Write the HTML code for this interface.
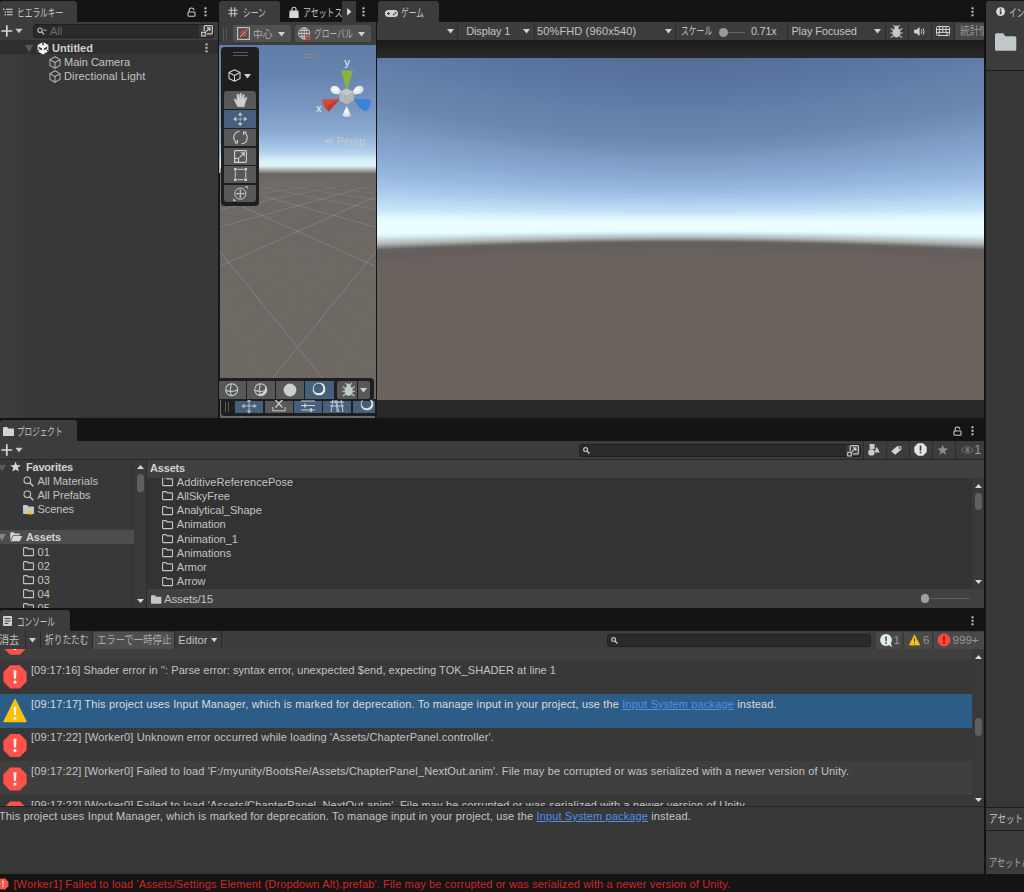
<!DOCTYPE html>
<html lang="ja">
<head>
<meta charset="utf-8">
<title>Unity Editor</title>
<style>
*{box-sizing:border-box;margin:0;padding:0}
html,body{width:1024px;height:892px;overflow:hidden;background:#141414}
body{position:relative;font-family:"Liberation Sans","Noto Sans CJK JP",sans-serif;font-size:11px;color:#c4c4c4;line-height:14px}
.abs{position:absolute}
.pan{position:absolute;background:#383838;overflow:hidden}
.tab{position:absolute;background:#3c3c3c;border-radius:3px 3px 0 0}
.tb{position:absolute;background:#3c3c3c}
.t{position:absolute;white-space:nowrap;line-height:14px}
.b{font-weight:bold}
.sx{display:inline-block;transform-origin:0 50%;white-space:nowrap}
.sep{position:absolute;width:1px;background:#2b2b2b}
svg{position:absolute;overflow:visible}
.btn{position:absolute;background:#515151;border-radius:2px}
.ob{position:absolute;background:#585858}
.ob.on{background:#46607c}
a{color:#4f92e8;text-decoration:underline}
</style>
<style>#gimg i{position:absolute;top:0;height:100%}.g0{background:linear-gradient(#526892 -18.3px,#566c96 0.7px,#58719e 15.7px,#5d79a4 41.7px,#647fa9 56.7px,#6b88b1 81.7px,#7190b8 91.7px,#7c9cc4 101.7px,#84a2cc 111.7px,#8cadd6 121.7px,#98b9de 131.7px,#a8c8ec 141.7px,#b6d8f2 148.7px,#c4e4f6 154.7px,#dcf4fc 159.7px,#eafeff 164.2px,#eafeff 172.2px,#d4f0fa 174.7px,#c8d6d8 176.7px,#b0b4b4 179.7px,#8e8e8c 181.7px,#686462 183.7px,#625e5c 186.7px,#68615d 191.7px,#6b635e 203.7px,#6b635e 361.7px)}.g1{background:linear-gradient(#526892 -18.4px,#566c96 0.6px,#58719e 15.6px,#5d79a4 41.6px,#647fa9 56.6px,#6b88b1 81.6px,#7190b8 91.6px,#7c9cc4 101.6px,#84a2cc 111.7px,#8cadd6 121.7px,#98b9de 131.7px,#a8c8ec 141.7px,#b6d8f2 148.7px,#c4e4f6 154.7px,#dcf4fc 159.7px,#eafeff 164.2px,#eafeff 172.2px,#d4f0fa 174.7px,#c8d6d8 176.7px,#b0b4b4 179.7px,#8e8e8c 181.7px,#686462 183.7px,#625e5c 186.7px,#68615d 191.7px,#6b635e 203.7px,#6b635e 361.9px)}.g2{background:linear-gradient(#526892 -18.7px,#566c96 0.3px,#58719e 15.4px,#5d79a4 41.4px,#647fa9 56.5px,#6b88b1 81.5px,#7190b8 91.5px,#7c9cc4 101.6px,#84a2cc 111.6px,#8cadd6 121.6px,#98b9de 131.6px,#a8c8ec 141.6px,#b6d8f2 148.7px,#c4e4f6 154.7px,#dcf4fc 159.7px,#eafeff 164.2px,#eafeff 172.2px,#d4f0fa 174.7px,#c8d6d8 176.7px,#b0b4b4 179.7px,#8e8e8c 181.7px,#686462 183.7px,#625e5c 186.7px,#68615d 191.8px,#6b635e 203.8px,#6b635e 362.1px)}.g3{background:linear-gradient(#526892 -19.1px,#566c96 -0.0px,#58719e 15.1px,#5d79a4 41.2px,#647fa9 56.2px,#6b88b1 81.3px,#7190b8 91.4px,#7c9cc4 101.4px,#84a2cc 111.5px,#8cadd6 121.5px,#98b9de 131.6px,#a8c8ec 141.6px,#b6d8f2 148.6px,#c4e4f6 154.7px,#dcf4fc 159.7px,#eafeff 164.2px,#eafeff 172.2px,#d4f0fa 174.7px,#c8d6d8 176.8px,#b0b4b4 179.8px,#8e8e8c 181.8px,#686462 183.8px,#625e5c 186.8px,#68615d 191.8px,#6b635e 203.9px,#6b635e 362.6px)}.g4{background:linear-gradient(#526892 -19.6px,#566c96 -0.5px,#58719e 14.6px,#5d79a4 40.8px,#647fa9 55.9px,#6b88b1 81.1px,#7190b8 91.2px,#7c9cc4 101.2px,#84a2cc 111.3px,#8cadd6 121.4px,#98b9de 131.5px,#a8c8ec 141.5px,#b6d8f2 148.6px,#c4e4f6 154.6px,#dcf4fc 159.7px,#eafeff 164.2px,#eafeff 172.3px,#d4f0fa 174.8px,#c8d6d8 176.8px,#b0b4b4 179.8px,#8e8e8c 181.8px,#686462 183.8px,#625e5c 186.9px,#68615d 191.9px,#6b635e 204.0px,#6b635e 363.1px)}.g5{background:linear-gradient(#526892 -20.3px,#566c96 -1.1px,#58719e 14.1px,#5d79a4 40.4px,#647fa9 55.5px,#6b88b1 80.8px,#7190b8 90.9px,#7c9cc4 101.0px,#84a2cc 111.1px,#8cadd6 121.2px,#98b9de 131.3px,#a8c8ec 141.5px,#b6d8f2 148.5px,#c4e4f6 154.6px,#dcf4fc 159.6px,#eafeff 164.2px,#eafeff 172.3px,#d4f0fa 174.8px,#c8d6d8 176.8px,#b0b4b4 179.9px,#8e8e8c 181.9px,#686462 183.9px,#625e5c 186.9px,#68615d 192.0px,#6b635e 204.1px,#6b635e 363.8px)}.g6{background:linear-gradient(#526892 -21.0px,#566c96 -1.7px,#58719e 13.5px,#5d79a4 39.9px,#647fa9 55.1px,#6b88b1 80.5px,#7190b8 90.6px,#7c9cc4 100.8px,#84a2cc 110.9px,#8cadd6 121.1px,#98b9de 131.2px,#a8c8ec 141.4px,#b6d8f2 148.5px,#c4e4f6 154.6px,#dcf4fc 159.6px,#eafeff 164.2px,#eafeff 172.3px,#d4f0fa 174.8px,#c8d6d8 176.9px,#b0b4b4 179.9px,#8e8e8c 182.0px,#686462 184.0px,#625e5c 187.0px,#68615d 192.1px,#6b635e 204.3px,#6b635e 364.6px)}.g7{background:linear-gradient(#526892 -21.9px,#566c96 -2.5px,#58719e 12.7px,#5d79a4 39.3px,#647fa9 54.6px,#6b88b1 80.1px,#7190b8 90.3px,#7c9cc4 100.5px,#84a2cc 110.7px,#8cadd6 120.8px,#98b9de 131.0px,#a8c8ec 141.2px,#b6d8f2 148.4px,#c4e4f6 154.5px,#dcf4fc 159.6px,#eafeff 164.2px,#eafeff 172.3px,#d4f0fa 174.9px,#c8d6d8 176.9px,#b0b4b4 180.0px,#8e8e8c 182.0px,#686462 184.1px,#625e5c 187.1px,#68615d 192.2px,#6b635e 204.5px,#6b635e 365.6px)}.g8{background:linear-gradient(#526892 -22.9px,#566c96 -3.5px,#58719e 11.9px,#5d79a4 38.6px,#647fa9 54.0px,#6b88b1 79.6px,#7190b8 89.8px,#7c9cc4 100.1px,#84a2cc 110.4px,#8cadd6 120.6px,#98b9de 130.9px,#a8c8ec 141.1px,#b6d8f2 148.3px,#c4e4f6 154.4px,#dcf4fc 159.6px,#eafeff 164.2px,#eafeff 172.4px,#d4f0fa 175.0px,#c8d6d8 177.0px,#b0b4b4 180.1px,#8e8e8c 182.1px,#686462 184.2px,#625e5c 187.3px,#68615d 192.4px,#6b635e 204.7px,#6b635e 366.7px)}.g9{background:linear-gradient(#526892 -24.1px,#566c96 -4.5px,#58719e 11.0px,#5d79a4 37.8px,#647fa9 53.3px,#6b88b1 79.1px,#7190b8 89.4px,#7c9cc4 99.7px,#84a2cc 110.0px,#8cadd6 120.3px,#98b9de 130.7px,#a8c8ec 141.0px,#b6d8f2 148.2px,#c4e4f6 154.4px,#dcf4fc 159.5px,#eafeff 164.2px,#eafeff 172.4px,#d4f0fa 175.0px,#c8d6d8 177.1px,#b0b4b4 180.2px,#8e8e8c 182.2px,#686462 184.3px,#625e5c 187.4px,#68615d 192.6px,#6b635e 204.9px,#6b635e 367.9px)}.g10{background:linear-gradient(#526892 -25.3px,#566c96 -5.6px,#58719e 10.0px,#5d79a4 37.0px,#647fa9 52.5px,#6b88b1 78.5px,#7190b8 88.9px,#7c9cc4 99.3px,#84a2cc 109.7px,#8cadd6 120.0px,#98b9de 130.4px,#a8c8ec 140.8px,#b6d8f2 148.1px,#c4e4f6 154.3px,#dcf4fc 159.5px,#eafeff 164.2px,#eafeff 172.5px,#d4f0fa 175.1px,#c8d6d8 177.2px,#b0b4b4 180.3px,#8e8e8c 182.4px,#686462 184.4px,#625e5c 187.5px,#68615d 192.7px,#6b635e 205.2px,#6b635e 369.3px)}.g11{background:linear-gradient(#526892 -26.7px,#566c96 -6.8px,#58719e 8.9px,#5d79a4 36.0px,#647fa9 51.7px,#6b88b1 77.9px,#7190b8 88.3px,#7c9cc4 98.8px,#84a2cc 109.3px,#8cadd6 119.7px,#98b9de 130.2px,#a8c8ec 140.6px,#b6d8f2 148.0px,#c4e4f6 154.2px,#dcf4fc 159.5px,#eafeff 164.2px,#eafeff 172.5px,#d4f0fa 175.2px,#c8d6d8 177.3px,#b0b4b4 180.4px,#8e8e8c 182.5px,#686462 184.6px,#625e5c 187.7px,#68615d 192.9px,#6b635e 205.5px,#6b635e 370.8px)}.g12{background:linear-gradient(#526892 -28.2px,#566c96 -8.2px,#58719e 7.6px,#5d79a4 35.0px,#647fa9 50.9px,#6b88b1 77.2px,#7190b8 87.8px,#7c9cc4 98.3px,#84a2cc 108.8px,#8cadd6 119.4px,#98b9de 129.9px,#a8c8ec 140.5px,#b6d8f2 147.8px,#c4e4f6 154.2px,#dcf4fc 159.4px,#eafeff 164.2px,#eafeff 172.6px,#d4f0fa 175.2px,#c8d6d8 177.3px,#b0b4b4 180.5px,#8e8e8c 182.6px,#686462 184.7px,#625e5c 187.9px,#68615d 193.2px,#6b635e 205.8px,#6b635e 372.4px)}.g13{background:linear-gradient(#526892 -29.8px,#566c96 -9.6px,#58719e 6.3px,#5d79a4 34.0px,#647fa9 49.9px,#6b88b1 76.5px,#7190b8 87.1px,#7c9cc4 97.7px,#84a2cc 108.4px,#8cadd6 119.0px,#98b9de 129.6px,#a8c8ec 140.3px,#b6d8f2 147.7px,#c4e4f6 154.1px,#dcf4fc 159.4px,#eafeff 164.2px,#eafeff 172.7px,#d4f0fa 175.3px,#c8d6d8 177.5px,#b0b4b4 180.6px,#8e8e8c 182.8px,#686462 184.9px,#625e5c 188.1px,#68615d 193.4px,#6b635e 206.2px,#6b635e 374.1px)}.g14{background:linear-gradient(#526892 -31.5px,#566c96 -11.1px,#58719e 4.9px,#5d79a4 32.8px,#647fa9 48.9px,#6b88b1 75.7px,#7190b8 86.4px,#7c9cc4 97.2px,#84a2cc 107.9px,#8cadd6 118.6px,#98b9de 129.3px,#a8c8ec 140.0px,#b6d8f2 147.5px,#c4e4f6 154.0px,#dcf4fc 159.3px,#eafeff 164.2px,#eafeff 172.7px,#d4f0fa 175.4px,#c8d6d8 177.6px,#b0b4b4 180.8px,#8e8e8c 182.9px,#686462 185.1px,#625e5c 188.3px,#68615d 193.6px,#6b635e 206.5px,#6b635e 375.9px)}.g15{background:linear-gradient(#526892 -33.3px,#566c96 -12.8px,#58719e 3.5px,#5d79a4 31.6px,#647fa9 47.8px,#6b88b1 74.9px,#7190b8 85.7px,#7c9cc4 96.5px,#84a2cc 107.4px,#8cadd6 118.2px,#98b9de 129.0px,#a8c8ec 139.8px,#b6d8f2 147.4px,#c4e4f6 153.9px,#dcf4fc 159.3px,#eafeff 164.2px,#eafeff 172.8px,#d4f0fa 175.5px,#c8d6d8 177.7px,#b0b4b4 180.9px,#8e8e8c 183.1px,#686462 185.3px,#625e5c 188.5px,#68615d 193.9px,#6b635e 206.9px,#6b635e 377.9px)}.g16{background:linear-gradient(#526892 -35.2px,#566c96 -14.5px,#58719e 1.9px,#5d79a4 30.3px,#647fa9 46.7px,#6b88b1 74.0px,#7190b8 84.9px,#7c9cc4 95.9px,#84a2cc 106.8px,#8cadd6 117.7px,#98b9de 128.6px,#a8c8ec 139.6px,#b6d8f2 147.2px,#c4e4f6 153.8px,#dcf4fc 159.2px,#eafeff 164.2px,#eafeff 172.9px,#d4f0fa 175.6px,#c8d6d8 177.8px,#b0b4b4 181.1px,#8e8e8c 183.3px,#686462 185.5px,#625e5c 188.7px,#68615d 194.2px,#6b635e 207.3px,#6b635e 379.9px)}.g17{background:linear-gradient(#526892 -37.2px,#566c96 -16.3px,#58719e 0.3px,#5d79a4 29.0px,#647fa9 45.5px,#6b88b1 73.1px,#7190b8 84.1px,#7c9cc4 95.2px,#84a2cc 106.2px,#8cadd6 117.2px,#98b9de 128.3px,#a8c8ec 139.3px,#b6d8f2 147.0px,#c4e4f6 153.7px,#dcf4fc 159.2px,#eafeff 164.1px,#eafeff 173.0px,#d4f0fa 175.7px,#c8d6d8 177.9px,#b0b4b4 181.3px,#8e8e8c 183.5px,#686462 185.7px,#625e5c 189.0px,#68615d 194.5px,#6b635e 207.7px,#6b635e 382.1px)}.g18{background:linear-gradient(#526892 -39.4px,#566c96 -18.2px,#58719e -1.4px,#5d79a4 27.5px,#647fa9 44.3px,#6b88b1 72.1px,#7190b8 83.3px,#7c9cc4 94.5px,#84a2cc 105.6px,#8cadd6 116.8px,#98b9de 127.9px,#a8c8ec 139.1px,#b6d8f2 146.9px,#c4e4f6 153.5px,#dcf4fc 159.1px,#eafeff 164.1px,#eafeff 173.1px,#d4f0fa 175.9px,#c8d6d8 178.1px,#b0b4b4 181.4px,#8e8e8c 183.7px,#686462 185.9px,#625e5c 189.2px,#68615d 194.8px,#6b635e 208.2px,#6b635e 384.4px)}.g19{background:linear-gradient(#526892 -41.6px,#566c96 -20.1px,#58719e -3.2px,#5d79a4 26.1px,#647fa9 43.0px,#6b88b1 71.1px,#7190b8 82.4px,#7c9cc4 93.7px,#84a2cc 105.0px,#8cadd6 116.2px,#98b9de 127.5px,#a8c8ec 138.8px,#b6d8f2 146.7px,#c4e4f6 153.4px,#dcf4fc 159.1px,#eafeff 164.1px,#eafeff 173.2px,#d4f0fa 176.0px,#c8d6d8 178.2px,#b0b4b4 181.6px,#8e8e8c 183.9px,#686462 186.1px,#625e5c 189.5px,#68615d 195.1px,#6b635e 208.7px,#6b635e 386.7px)}.g20{background:linear-gradient(#526892 -43.9px,#566c96 -22.2px,#58719e -5.1px,#5d79a4 24.5px,#647fa9 41.6px,#6b88b1 70.1px,#7190b8 81.5px,#7c9cc4 92.9px,#84a2cc 104.3px,#8cadd6 115.7px,#98b9de 127.1px,#a8c8ec 138.5px,#b6d8f2 146.5px,#c4e4f6 153.3px,#dcf4fc 159.0px,#eafeff 164.1px,#eafeff 173.2px,#d4f0fa 176.1px,#c8d6d8 178.4px,#b0b4b4 181.8px,#8e8e8c 184.1px,#686462 186.4px,#625e5c 189.8px,#68615d 195.5px,#6b635e 209.1px,#6b635e 389.2px)}.g21{background:linear-gradient(#526892 -46.2px,#566c96 -24.3px,#58719e -7.1px,#5d79a4 22.9px,#647fa9 40.2px,#6b88b1 69.0px,#7190b8 80.6px,#7c9cc4 92.1px,#84a2cc 103.6px,#8cadd6 115.1px,#98b9de 126.7px,#a8c8ec 138.2px,#b6d8f2 146.3px,#c4e4f6 153.2px,#dcf4fc 158.9px,#eafeff 164.1px,#eafeff 173.3px,#d4f0fa 176.2px,#c8d6d8 178.5px,#b0b4b4 182.0px,#8e8e8c 184.3px,#686462 186.6px,#625e5c 190.1px,#68615d 195.8px,#6b635e 209.7px,#6b635e 391.8px)}.g22{background:linear-gradient(#526892 -48.7px,#566c96 -26.6px,#58719e -9.1px,#5d79a4 21.3px,#647fa9 38.8px,#6b88b1 67.9px,#7190b8 79.6px,#7c9cc4 91.2px,#84a2cc 102.9px,#8cadd6 114.6px,#98b9de 126.2px,#a8c8ec 137.9px,#b6d8f2 146.0px,#c4e4f6 153.0px,#dcf4fc 158.9px,#eafeff 164.1px,#eafeff 173.4px,#d4f0fa 176.4px,#c8d6d8 178.7px,#b0b4b4 182.2px,#8e8e8c 184.5px,#686462 186.9px,#625e5c 190.4px,#68615d 196.2px,#6b635e 210.2px,#6b635e 394.4px)}.g23{background:linear-gradient(#526892 -51.3px,#566c96 -28.8px,#58719e -11.1px,#5d79a4 19.5px,#647fa9 37.2px,#6b88b1 66.7px,#7190b8 78.6px,#7c9cc4 90.4px,#84a2cc 102.2px,#8cadd6 114.0px,#98b9de 125.8px,#a8c8ec 137.6px,#b6d8f2 145.8px,#c4e4f6 152.9px,#dcf4fc 158.8px,#eafeff 164.1px,#eafeff 173.6px,#d4f0fa 176.5px,#c8d6d8 178.9px,#b0b4b4 182.4px,#8e8e8c 184.8px,#686462 187.1px,#625e5c 190.7px,#68615d 196.6px,#6b635e 210.7px,#6b635e 397.2px)}.g24{background:linear-gradient(#526892 -53.9px,#566c96 -31.2px,#58719e -13.3px,#5d79a4 17.8px,#647fa9 35.7px,#6b88b1 65.6px,#7190b8 77.5px,#7c9cc4 89.4px,#84a2cc 101.4px,#8cadd6 113.3px,#98b9de 125.3px,#a8c8ec 137.2px,#b6d8f2 145.6px,#c4e4f6 152.8px,#dcf4fc 158.7px,#eafeff 164.1px,#eafeff 173.7px,#d4f0fa 176.6px,#c8d6d8 179.0px,#b0b4b4 182.6px,#8e8e8c 185.0px,#686462 187.4px,#625e5c 191.0px,#68615d 197.0px,#6b635e 211.3px,#6b635e 400.0px)}.g25{background:linear-gradient(#526892 -56.6px,#566c96 -33.6px,#58719e -15.5px,#5d79a4 16.0px,#647fa9 34.1px,#6b88b1 64.3px,#7190b8 76.4px,#7c9cc4 88.5px,#84a2cc 100.6px,#8cadd6 112.7px,#98b9de 124.8px,#a8c8ec 136.9px,#b6d8f2 145.4px,#c4e4f6 152.6px,#dcf4fc 158.7px,#eafeff 164.1px,#eafeff 173.8px,#d4f0fa 176.8px,#c8d6d8 179.2px,#b0b4b4 182.8px,#8e8e8c 185.3px,#686462 187.7px,#625e5c 191.3px,#68615d 197.4px,#6b635e 211.9px,#6b635e 402.9px)}.g26{background:linear-gradient(#526892 -59.4px,#566c96 -36.1px,#58719e -17.7px,#5d79a4 14.1px,#647fa9 32.5px,#6b88b1 63.1px,#7190b8 75.3px,#7c9cc4 87.6px,#84a2cc 99.8px,#8cadd6 112.0px,#98b9de 124.3px,#a8c8ec 136.5px,#b6d8f2 145.1px,#c4e4f6 152.5px,#dcf4fc 158.6px,#eafeff 164.1px,#eafeff 173.9px,#d4f0fa 176.9px,#c8d6d8 179.4px,#b0b4b4 183.1px,#8e8e8c 185.5px,#686462 188.0px,#625e5c 191.6px,#68615d 197.8px,#6b635e 212.5px,#6b635e 405.9px)}.g27{background:linear-gradient(#526892 -62.2px,#566c96 -38.7px,#58719e -20.1px,#5d79a4 12.2px,#647fa9 30.8px,#6b88b1 61.8px,#7190b8 74.2px,#7c9cc4 86.6px,#84a2cc 99.0px,#8cadd6 111.4px,#98b9de 123.8px,#a8c8ec 136.2px,#b6d8f2 144.9px,#c4e4f6 152.3px,#dcf4fc 158.5px,#eafeff 164.1px,#eafeff 174.0px,#d4f0fa 177.1px,#c8d6d8 179.6px,#b0b4b4 183.3px,#8e8e8c 185.8px,#686462 188.3px,#625e5c 192.0px,#68615d 198.2px,#6b635e 213.1px,#6b635e 409.0px)}.g28{background:linear-gradient(#526892 -65.2px,#566c96 -41.3px,#58719e -22.4px,#5d79a4 10.2px,#647fa9 29.0px,#6b88b1 60.4px,#7190b8 73.0px,#7c9cc4 85.6px,#84a2cc 98.1px,#8cadd6 110.7px,#98b9de 123.3px,#a8c8ec 135.8px,#b6d8f2 144.6px,#c4e4f6 152.1px,#dcf4fc 158.4px,#eafeff 164.1px,#eafeff 174.1px,#d4f0fa 177.3px,#c8d6d8 179.8px,#b0b4b4 183.5px,#8e8e8c 186.1px,#686462 188.6px,#625e5c 192.3px,#68615d 198.6px,#6b635e 213.7px,#6b635e 412.1px)}.g29{background:linear-gradient(#526892 -68.1px,#566c96 -44.0px,#58719e -24.9px,#5d79a4 8.2px,#647fa9 27.3px,#6b88b1 59.1px,#7190b8 71.8px,#7c9cc4 84.5px,#84a2cc 97.3px,#8cadd6 110.0px,#98b9de 122.7px,#a8c8ec 135.4px,#b6d8f2 144.3px,#c4e4f6 152.0px,#dcf4fc 158.3px,#eafeff 164.1px,#eafeff 174.2px,#d4f0fa 177.4px,#c8d6d8 180.0px,#b0b4b4 183.8px,#8e8e8c 186.3px,#686462 188.9px,#625e5c 192.7px,#68615d 199.1px,#6b635e 214.3px,#6b635e 415.4px)}.g30{background:linear-gradient(#526892 -71.2px,#566c96 -46.7px,#58719e -27.4px,#5d79a4 6.2px,#647fa9 25.5px,#6b88b1 57.7px,#7190b8 70.6px,#7c9cc4 83.5px,#84a2cc 96.4px,#8cadd6 109.3px,#98b9de 122.2px,#a8c8ec 135.1px,#b6d8f2 144.1px,#c4e4f6 151.8px,#dcf4fc 158.3px,#eafeff 164.1px,#eafeff 174.4px,#d4f0fa 177.6px,#c8d6d8 180.2px,#b0b4b4 184.0px,#8e8e8c 186.6px,#686462 189.2px,#625e5c 193.1px,#68615d 199.5px,#6b635e 215.0px,#6b635e 418.6px)}.g31{background:linear-gradient(#526892 -74.3px,#566c96 -49.5px,#58719e -29.9px,#5d79a4 4.1px,#647fa9 23.7px,#6b88b1 56.3px,#7190b8 69.4px,#7c9cc4 82.4px,#84a2cc 95.5px,#8cadd6 108.5px,#98b9de 121.6px,#a8c8ec 134.7px,#b6d8f2 143.8px,#c4e4f6 151.6px,#dcf4fc 158.2px,#eafeff 164.0px,#eafeff 174.5px,#d4f0fa 177.8px,#c8d6d8 180.4px,#b0b4b4 184.3px,#8e8e8c 186.9px,#686462 189.5px,#625e5c 193.4px,#68615d 200.0px,#6b635e 215.6px,#6b635e 422.0px)}.g32{background:linear-gradient(#526892 -77.5px,#566c96 -52.3px,#58719e -32.5px,#5d79a4 1.9px,#647fa9 21.8px,#6b88b1 54.9px,#7190b8 68.1px,#7c9cc4 81.3px,#84a2cc 94.6px,#8cadd6 107.8px,#98b9de 121.0px,#a8c8ec 134.3px,#b6d8f2 143.5px,#c4e4f6 151.5px,#dcf4fc 158.1px,#eafeff 164.0px,#eafeff 174.6px,#d4f0fa 177.9px,#c8d6d8 180.6px,#b0b4b4 184.5px,#8e8e8c 187.2px,#686462 189.8px,#625e5c 193.8px,#68615d 200.4px,#6b635e 216.3px,#6b635e 425.4px)}.g33{background:linear-gradient(#526892 -80.7px,#566c96 -55.2px,#58719e -35.1px,#5d79a4 -0.2px,#647fa9 19.9px,#6b88b1 53.4px,#7190b8 66.8px,#7c9cc4 80.2px,#84a2cc 93.6px,#8cadd6 107.0px,#98b9de 120.4px,#a8c8ec 133.9px,#b6d8f2 143.2px,#c4e4f6 151.3px,#dcf4fc 158.0px,#eafeff 164.0px,#eafeff 174.8px,#d4f0fa 178.1px,#c8d6d8 180.8px,#b0b4b4 184.8px,#8e8e8c 187.5px,#686462 190.2px,#625e5c 194.2px,#68615d 200.9px,#6b635e 217.0px,#6b635e 428.9px)}.g34{background:linear-gradient(#526892 -84.0px,#566c96 -58.1px,#58719e -37.8px,#5d79a4 -2.4px,#647fa9 17.9px,#6b88b1 51.9px,#7190b8 65.5px,#7c9cc4 79.1px,#84a2cc 92.7px,#8cadd6 106.3px,#98b9de 119.9px,#a8c8ec 133.4px,#b6d8f2 143.0px,#c4e4f6 151.1px,#dcf4fc 157.9px,#eafeff 164.0px,#eafeff 174.9px,#d4f0fa 178.3px,#c8d6d8 181.0px,#b0b4b4 185.1px,#8e8e8c 187.8px,#686462 190.5px,#625e5c 194.6px,#68615d 201.4px,#6b635e 217.7px,#6b635e 432.4px)}.g35{background:linear-gradient(#526892 -87.3px,#566c96 -61.1px,#58719e -40.5px,#5d79a4 -4.7px,#647fa9 16.0px,#6b88b1 50.4px,#7190b8 64.2px,#7c9cc4 77.9px,#84a2cc 91.7px,#8cadd6 105.5px,#98b9de 119.3px,#a8c8ec 133.0px,#b6d8f2 142.7px,#c4e4f6 150.9px,#dcf4fc 157.8px,#eafeff 164.0px,#eafeff 175.0px,#d4f0fa 178.5px,#c8d6d8 181.2px,#b0b4b4 185.4px,#8e8e8c 188.1px,#686462 190.9px,#625e5c 195.0px,#68615d 201.9px,#6b635e 218.4px,#6b635e 436.0px)}.g36{background:linear-gradient(#526892 -90.7px,#566c96 -64.2px,#58719e -43.2px,#5d79a4 -6.9px,#647fa9 14.0px,#6b88b1 48.9px,#7190b8 62.8px,#7c9cc4 76.8px,#84a2cc 90.7px,#8cadd6 104.7px,#98b9de 118.6px,#a8c8ec 132.6px,#b6d8f2 142.4px,#c4e4f6 150.7px,#dcf4fc 157.7px,#eafeff 164.0px,#eafeff 175.2px,#d4f0fa 178.7px,#c8d6d8 181.4px,#b0b4b4 185.6px,#8e8e8c 188.4px,#686462 191.2px,#625e5c 195.4px,#68615d 202.4px,#6b635e 219.1px,#6b635e 439.6px)}.g37{background:linear-gradient(#526892 -94.1px,#566c96 -67.2px,#58719e -46.0px,#5d79a4 -9.2px,#647fa9 12.0px,#6b88b1 47.3px,#7190b8 61.5px,#7c9cc4 75.6px,#84a2cc 89.7px,#8cadd6 103.9px,#98b9de 118.0px,#a8c8ec 132.2px,#b6d8f2 142.1px,#c4e4f6 150.6px,#dcf4fc 157.6px,#eafeff 164.0px,#eafeff 175.3px,#d4f0fa 178.8px,#c8d6d8 181.7px,#b0b4b4 185.9px,#8e8e8c 188.7px,#686462 191.6px,#625e5c 195.8px,#68615d 202.9px,#6b635e 219.9px,#6b635e 443.3px)}</style>
</head>
<body>

<div class="tab" style="left:0;top:1px;width:77px;height:22px"></div>
<svg style="left:3px;top:8px" width="10" height="8" viewBox="0 0 10 8" fill="#c4c4c4"><rect x="0" y="0.6" width="1.5" height="1.4"/><rect x="3" y="0.7" width="6.6" height="1.2"/><rect x="1.6" y="3.3" width="1.5" height="1.4"/><rect x="4" y="3.4" width="5.6" height="1.2"/><rect x="1.6" y="6" width="1.5" height="1.4"/><rect x="4" y="6.1" width="5.6" height="1.2"/></svg>
<div class="t" id="t_hier" style="left:17px;top:5.7px"><span class="sx" style="transform:scaleX(0.7)">ヒエラルキー</span></div>
<svg style="left:186.5px;top:6.8px" width="9" height="10" viewBox="0 0 9 10"><rect x="1" y="5" width="7" height="4.2" rx="0.8" fill="none" stroke="#c8c8c8" stroke-width="1.1"/><path d="M2.2 5V3.4A2.3 2.3 0 0 1 6.8 3.2" fill="none" stroke="#c8c8c8" stroke-width="1.05"/></svg>
<svg style="left:204.3px;top:6.8px" width="3" height="10" viewBox="0 0 3 10"><g fill="#c4c4c4"><rect x="0.5" y="0.3" width="2" height="2"/><rect x="0.5" y="3.8" width="2" height="2"/><rect x="0.5" y="7.3" width="2" height="2"/></g></svg>
<div class="pan" id="hier" style="left:0;top:22px;width:218px;height:396px">
<div class="tb" style="left:0;top:0;width:218px;height:18px"></div>
<svg style="left:0.8px;top:3px" width="22" height="12" viewBox="0 0 22 12"><path d="M0.3 6H11.3M5.8 0.3V11.7" stroke="#d6d6d6" stroke-width="1.7" fill="none"/><path d="M14.3 3.8H21.7L18 8.2Z" fill="#c8c8c8"/></svg>
<div class="abs" style="left:33px;top:2px;width:181px;height:14px;background:#2a2a2a;border:1px solid #1f1f1f;border-radius:3px"></div>
<div class="abs" style="left:199px;top:3px;width:14px;height:12px;background:#3a3a3a;border-radius:0 2px 2px 0"></div>
<svg style="left:37px;top:5px" width="10" height="9" viewBox="0 0 10 9" fill="none" stroke="#b4b4b4"><circle cx="3" cy="3.2" r="2.2" stroke-width="1.2"/><path d="M4.8 5L7 7.4" stroke-width="1.5"/><path d="M6.6 3.2H9.4" stroke-width="1.2"/></svg>
<div class="t" id="t_all" style="left:50px;top:2px;color:#6c6c6c">All</div>
<svg style="left:200.5px;top:3.3px" width="12" height="12" viewBox="0 0 12 12" fill="none" stroke="#c8c8c8"><path d="M3.2 6.2V1.6A1 1 0 0 1 4.2 0.6H10.4A1 1 0 0 1 11.4 1.6V7.8A1 1 0 0 1 10.4 8.8H5.8" stroke-width="1.2"/><rect x="0.7" y="7.4" width="3.6" height="3.6" stroke-width="1.1"/><path d="M4.6 7.2L8.8 3M5.9 2.9H8.9V5.9" stroke-width="1.2"/></svg>
<div class="abs" style="left:0;top:32px;width:23px;bottom:0;background:#3b3b3b"></div>
<div class="abs" style="left:0;top:18px;width:218px;height:14px;background:#2f2f2f"></div>
<svg style="left:24.8px;top:23px" width="8.2" height="7" viewBox="0 0 8.2 7"><path d="M0 0H8.2L4.1 7Z" fill="#5a5a5a"/></svg>
<svg style="left:36.6px;top:19.7px" width="12" height="12.4" viewBox="0 0 12 12.4"><path d="M6 0L11.4 3.1V9.3L6 12.4L0.6 9.3V3.1Z" fill="#eef4f6"/><path d="M5.3 0V3.2H6.7V0Z" fill="#2f2f2f"/><path d="M1.6 4.6L5 6.4V8.2L2.2 7Z" fill="#2f2f2f"/><path d="M10.4 4.6L7 6.4V8.2L9.8 7Z" fill="#2f2f2f"/><path d="M0.6 8.2L1.8 7.6L2.4 8.6L1.2 9.6ZM11.4 8.2L10.2 7.6L9.6 8.6L10.8 9.6Z" fill="#2f2f2f"/></svg>
<div class="t b" id="t_untitled" style="left:52px;top:18.7px;color:#d2d2d2">Untitled</div>
<svg style="left:205px;top:21px" width="3" height="10" viewBox="0 0 3 10"><g fill="#c4c4c4"><rect x="0.5" y="0.3" width="2" height="2"/><rect x="0.5" y="3.8" width="2" height="2"/><rect x="0.5" y="7.3" width="2" height="2"/></g></svg>
<svg style="left:48.6px;top:34px" width="12" height="13" viewBox="0 0 13 13" preserveAspectRatio="none" fill="none" stroke="#bcbcbc" stroke-width="1.05" stroke-linejoin="round"><path d="M6.5 0.7L12 3.6V9.4L6.5 12.3L1 9.4V3.6Z"/><path d="M1 3.6L6.5 6.5L12 3.6M6.5 6.5V12.3"/></svg>
<svg style="left:48.6px;top:48px" width="12" height="13" viewBox="0 0 13 13" preserveAspectRatio="none" fill="none" stroke="#bcbcbc" stroke-width="1.05" stroke-linejoin="round"><path d="M6.5 0.7L12 3.6V9.4L6.5 12.3L1 9.4V3.6Z"/><path d="M1 3.6L6.5 6.5L12 3.6M6.5 6.5V12.3"/></svg>
<div class="t" id="t_maincam" style="left:64px;top:33px">Main Camera</div>
<div class="t" id="t_dirlight" style="letter-spacing:0.153px;left:64px;top:47px">Directional Light</div>
</div>
<div class="tab" style="left:219px;top:1px;width:60.5px;height:22px"></div>
<svg style="left:228px;top:7px" width="10" height="10" viewBox="0 0 10 10" fill="none" stroke="#c8c8c8" stroke-width="1.1"><path d="M3.2 0.3V9.7M6.8 0.3V9.7M0.3 3.2H9.7M0.3 6.8H9.7"/></svg>
<div class="t" id="t_scene" style="left:243px;top:5.7px"><span class="sx" style="transform:scaleX(0.7)">シーン</span></div>
<svg style="left:289px;top:7px" width="10" height="11" viewBox="0 0 10 11"><path d="M0.6 3.6H9.4L9.8 10.2A0.7 0.7 0 0 1 9.1 10.9H0.9A0.7 0.7 0 0 1 0.2 10.2Z" fill="#d0d8d8"/><path d="M3 4.2V2.3A2 2 0 0 1 7 2.3V4.2" fill="none" stroke="#d0d8d8" stroke-width="1.1"/></svg>
<div class="t" id="t_asset" style="left:303px;top:5.7px;width:39px;overflow:hidden"><span class="sx" style="transform:scaleX(0.72)">アセットス</span></div>
<div class="abs" style="left:342px;top:1px;width:14px;height:21px;background:#3a3a3a"></div>
<svg style="left:346.6px;top:7.8px" width="4.4" height="7.4" viewBox="0 0 5 9"><path d="M0 0L5 4.5L0 9Z" fill="#e0e0e0"/></svg>
<svg style="left:362.2px;top:6.6px" width="3" height="10" viewBox="0 0 3 10"><g fill="#c4c4c4"><rect x="0.5" y="0.3" width="2" height="2"/><rect x="0.5" y="3.8" width="2" height="2"/><rect x="0.5" y="7.3" width="2" height="2"/></g></svg>
<div class="pan" id="scene" style="left:219px;top:22px;width:157px;height:396px;background:#191919">
<div class="tb" style="left:0;top:0;width:156.5px;height:23px"></div>
<div class="abs" style="left:3.9px;top:5px;width:1px;height:14px;background:#505660"></div><div class="abs" style="left:6.9px;top:5px;width:1px;height:14px;background:#555"></div>
<div class="btn" style="left:14px;top:3px;width:57.5px;height:17px"></div>
<svg style="left:18px;top:5px" width="13" height="13" viewBox="0 0 13 13" fill="none"><rect x="0.6" y="0.6" width="11.8" height="11.8" stroke="#c8c8c8" stroke-width="1.1"/><path d="M3 10L10.5 2.5" stroke="#c8c8c8" stroke-width="0.9"/><circle cx="6.6" cy="6.2" r="2.3" stroke="#e8483c" stroke-width="1.3"/></svg>
<div class="t" id="t_center" style="left:34px;top:5px;font-size:10.5px;color:#acacac"><span class="sx" style="transform:scaleX(0.92)">中心</span></div>
<svg style="left:59.4px;top:10px" width="7" height="4.4" viewBox="0 0 7 4.4"><path d="M0 0H7L3.5 4.4Z" fill="#d0d0d0"/></svg>
<div class="btn" style="left:76px;top:3px;width:76px;height:17px"></div>
<svg style="left:79px;top:5px" width="14" height="14" viewBox="0 0 14 14" fill="none" stroke="#c8c8c8" stroke-width="1"><circle cx="6.2" cy="6.4" r="5.6"/><ellipse cx="6.2" cy="6.4" rx="2.6" ry="5.6"/><path d="M0.6 6.4H11.8M1.6 3.4H10.8M1.6 9.4H10.8M6.2 0.8V12"/><circle cx="9.9" cy="10.3" r="2.3" stroke="#e04434" stroke-width="1.1" fill="#515151" fill-opacity=".6"/></svg>
<div class="t" id="t_global" style="left:94.5px;top:5.2px;color:#b4b4b4"><span class="sx" style="transform:scaleX(0.705)">グローバル</span></div>
<svg style="left:139.2px;top:10.1px" width="7" height="4.4" viewBox="0 0 7 4.4"><path d="M0 0H7L3.5 4.4Z" fill="#d0d0d0"/></svg>
</div>
<div class="abs" id="sview" style="left:220px;top:45px;width:155.5px;height:373px;overflow:hidden;background:linear-gradient(#5f7ca8 0px,#6684ad 30px,#7896c0 62px,#86a5cc 80px,#90b0d6 90.5px,#a8c8e8 103px,#b8d6ee 109px,#cce6f4 113px,#def4fc 117px,#dcf4fa 121px,#c4cccc 123px,#a8acac 125px,#8a8886 127px,#74706e 129px,#6c6866 131px,#6c6764 136px,#6e6863 160px)">
<svg style="left:0;top:0" width="155.5" height="373" viewBox="0 0 155.5 373"><defs><clipPath id="gc"><rect x="0" y="129" width="155.5" height="373"/></clipPath><linearGradient id="gfade" x1="0" y1="0" x2="0" y2="1"><stop offset="0" stop-color="#6c6662" stop-opacity="1"/><stop offset="1" stop-color="#6c6662" stop-opacity="0"/></linearGradient></defs><g clip-path="url(#gc)" stroke="#b8bcc2"><line x1="226.0" y1="120.0" x2="3.9" y2="393.0" stroke-opacity="0.3" stroke-width="1"/><line x1="-70.6" y1="120.0" x2="151.5" y2="393.0" stroke-opacity="0.3" stroke-width="1"/><line x1="226.0" y1="120.0" x2="-383.5" y2="393.0" stroke-opacity="0.27499999999999997" stroke-width="1"/><line x1="-70.6" y1="120.0" x2="538.9" y2="393.0" stroke-opacity="0.27499999999999997" stroke-width="1"/><line x1="226.0" y1="120.0" x2="-771.0" y2="393.0" stroke-opacity="0.25" stroke-width="1"/><line x1="-70.6" y1="120.0" x2="926.4" y2="393.0" stroke-opacity="0.25" stroke-width="1"/><line x1="226.0" y1="120.0" x2="-1158.4" y2="393.0" stroke-opacity="0.22499999999999998" stroke-width="1"/><line x1="-70.6" y1="120.0" x2="1313.8" y2="393.0" stroke-opacity="0.22499999999999998" stroke-width="1"/><line x1="226.0" y1="120.0" x2="-1545.9" y2="393.0" stroke-opacity="0.19999999999999998" stroke-width="1"/><line x1="-70.6" y1="120.0" x2="1701.3" y2="393.0" stroke-opacity="0.19999999999999998" stroke-width="1"/><line x1="226.0" y1="120.0" x2="-1933.3" y2="393.0" stroke-opacity="0.175" stroke-width="1"/><line x1="-70.6" y1="120.0" x2="2088.7" y2="393.0" stroke-opacity="0.175" stroke-width="1"/><line x1="226.0" y1="120.0" x2="-2320.8" y2="393.0" stroke-opacity="0.14999999999999997" stroke-width="1"/><line x1="-70.6" y1="120.0" x2="2476.2" y2="393.0" stroke-opacity="0.14999999999999997" stroke-width="1"/><line x1="226.0" y1="120.0" x2="-2708.2" y2="393.0" stroke-opacity="0.12499999999999997" stroke-width="1"/><line x1="-70.6" y1="120.0" x2="2863.6" y2="393.0" stroke-opacity="0.12499999999999997" stroke-width="1"/><line x1="226.0" y1="120.0" x2="-3095.7" y2="393.0" stroke-opacity="0.09999999999999998" stroke-width="1"/><line x1="-70.6" y1="120.0" x2="3251.1" y2="393.0" stroke-opacity="0.09999999999999998" stroke-width="1"/><line x1="226.0" y1="120.0" x2="-3483.1" y2="393.0" stroke-opacity="0.07499999999999998" stroke-width="1"/><line x1="-70.6" y1="120.0" x2="3638.5" y2="393.0" stroke-opacity="0.07499999999999998" stroke-width="1"/><line x1="226.0" y1="120.0" x2="-3870.6" y2="393.0" stroke-opacity="0.06" stroke-width="1"/><line x1="-70.6" y1="120.0" x2="4026.0" y2="393.0" stroke-opacity="0.06" stroke-width="1"/><line x1="226.0" y1="120.0" x2="-4258.0" y2="393.0" stroke-opacity="0.06" stroke-width="1"/><line x1="-70.6" y1="120.0" x2="4413.4" y2="393.0" stroke-opacity="0.06" stroke-width="1"/><line x1="226.0" y1="120.0" x2="-4645.5" y2="393.0" stroke-opacity="0.06" stroke-width="1"/><line x1="-70.6" y1="120.0" x2="4800.9" y2="393.0" stroke-opacity="0.06" stroke-width="1"/><line x1="226.0" y1="120.0" x2="-5032.9" y2="393.0" stroke-opacity="0.06" stroke-width="1"/><line x1="-70.6" y1="120.0" x2="5188.3" y2="393.0" stroke-opacity="0.06" stroke-width="1"/><line x1="226.0" y1="120.0" x2="701.3" y2="393.0" stroke-opacity="0.045" stroke-width="1"/><line x1="-70.6" y1="120.0" x2="-545.9" y2="393.0" stroke-opacity="0.045" stroke-width="1"/><line x1="226.0" y1="120.0" x2="623.9" y2="393.0" stroke-opacity="0.045" stroke-width="1"/><line x1="-70.6" y1="120.0" x2="-468.5" y2="393.0" stroke-opacity="0.045" stroke-width="1"/><line x1="226.0" y1="120.0" x2="546.4" y2="393.0" stroke-opacity="0.045" stroke-width="1"/><line x1="-70.6" y1="120.0" x2="-391.0" y2="393.0" stroke-opacity="0.045" stroke-width="1"/><line x1="226.0" y1="120.0" x2="468.9" y2="393.0" stroke-opacity="0.045" stroke-width="1"/><line x1="-70.6" y1="120.0" x2="-313.5" y2="393.0" stroke-opacity="0.045" stroke-width="1"/><line x1="226.0" y1="120.0" x2="313.9" y2="393.0" stroke-opacity="0.045" stroke-width="1"/><line x1="-70.6" y1="120.0" x2="-158.5" y2="393.0" stroke-opacity="0.045" stroke-width="1"/><line x1="226.0" y1="120.0" x2="236.4" y2="393.0" stroke-opacity="0.045" stroke-width="1"/><line x1="-70.6" y1="120.0" x2="-81.0" y2="393.0" stroke-opacity="0.045" stroke-width="1"/><line x1="226.0" y1="120.0" x2="158.9" y2="393.0" stroke-opacity="0.045" stroke-width="1"/><line x1="-70.6" y1="120.0" x2="-3.5" y2="393.0" stroke-opacity="0.045" stroke-width="1"/><line x1="226.0" y1="120.0" x2="81.4" y2="393.0" stroke-opacity="0.045" stroke-width="1"/><line x1="-70.6" y1="120.0" x2="74.0" y2="393.0" stroke-opacity="0.045" stroke-width="1"/><line x1="226.0" y1="120.0" x2="-73.6" y2="393.0" stroke-opacity="0.045" stroke-width="1"/><line x1="-70.6" y1="120.0" x2="229.0" y2="393.0" stroke-opacity="0.045" stroke-width="1"/><line x1="226.0" y1="120.0" x2="-151.0" y2="393.0" stroke-opacity="0.045" stroke-width="1"/><line x1="-70.6" y1="120.0" x2="306.4" y2="393.0" stroke-opacity="0.045" stroke-width="1"/><line x1="226.0" y1="120.0" x2="-228.5" y2="393.0" stroke-opacity="0.045" stroke-width="1"/><line x1="-70.6" y1="120.0" x2="383.9" y2="393.0" stroke-opacity="0.045" stroke-width="1"/><line x1="226.0" y1="120.0" x2="-306.0" y2="393.0" stroke-opacity="0.045" stroke-width="1"/><line x1="-70.6" y1="120.0" x2="461.4" y2="393.0" stroke-opacity="0.045" stroke-width="1"/><line x1="226.0" y1="120.0" x2="-461.0" y2="393.0" stroke-opacity="0.045" stroke-width="1"/><line x1="-70.6" y1="120.0" x2="616.4" y2="393.0" stroke-opacity="0.045" stroke-width="1"/><line x1="226.0" y1="120.0" x2="-538.5" y2="393.0" stroke-opacity="0.045" stroke-width="1"/><line x1="-70.6" y1="120.0" x2="693.9" y2="393.0" stroke-opacity="0.045" stroke-width="1"/><line x1="226.0" y1="120.0" x2="-616.0" y2="393.0" stroke-opacity="0.045" stroke-width="1"/><line x1="-70.6" y1="120.0" x2="771.4" y2="393.0" stroke-opacity="0.045" stroke-width="1"/><line x1="226.0" y1="120.0" x2="-693.5" y2="393.0" stroke-opacity="0.045" stroke-width="1"/><line x1="-70.6" y1="120.0" x2="848.9" y2="393.0" stroke-opacity="0.045" stroke-width="1"/><line x1="226.0" y1="120.0" x2="-848.5" y2="393.0" stroke-opacity="0.045" stroke-width="1"/><line x1="-70.6" y1="120.0" x2="1003.9" y2="393.0" stroke-opacity="0.045" stroke-width="1"/><line x1="226.0" y1="120.0" x2="-925.9" y2="393.0" stroke-opacity="0.045" stroke-width="1"/><line x1="-70.6" y1="120.0" x2="1081.3" y2="393.0" stroke-opacity="0.045" stroke-width="1"/><line x1="226.0" y1="120.0" x2="-1003.4" y2="393.0" stroke-opacity="0.045" stroke-width="1"/><line x1="-70.6" y1="120.0" x2="1158.8" y2="393.0" stroke-opacity="0.045" stroke-width="1"/><line x1="226.0" y1="120.0" x2="-1080.9" y2="393.0" stroke-opacity="0.045" stroke-width="1"/><line x1="-70.6" y1="120.0" x2="1236.3" y2="393.0" stroke-opacity="0.045" stroke-width="1"/><line x1="226.0" y1="120.0" x2="-1235.9" y2="393.0" stroke-opacity="0.045" stroke-width="1"/><line x1="-70.6" y1="120.0" x2="1391.3" y2="393.0" stroke-opacity="0.045" stroke-width="1"/><line x1="226.0" y1="120.0" x2="-1313.4" y2="393.0" stroke-opacity="0.045" stroke-width="1"/><line x1="-70.6" y1="120.0" x2="1468.8" y2="393.0" stroke-opacity="0.045" stroke-width="1"/><line x1="226.0" y1="120.0" x2="-1390.9" y2="393.0" stroke-opacity="0.045" stroke-width="1"/><line x1="-70.6" y1="120.0" x2="1546.3" y2="393.0" stroke-opacity="0.045" stroke-width="1"/><line x1="226.0" y1="120.0" x2="-1468.4" y2="393.0" stroke-opacity="0.045" stroke-width="1"/><line x1="-70.6" y1="120.0" x2="1623.8" y2="393.0" stroke-opacity="0.045" stroke-width="1"/><line x1="226.0" y1="120.0" x2="-1623.4" y2="393.0" stroke-opacity="0.045" stroke-width="1"/><line x1="-70.6" y1="120.0" x2="1778.8" y2="393.0" stroke-opacity="0.045" stroke-width="1"/><line x1="226.0" y1="120.0" x2="-1700.8" y2="393.0" stroke-opacity="0.045" stroke-width="1"/><line x1="-70.6" y1="120.0" x2="1856.2" y2="393.0" stroke-opacity="0.045" stroke-width="1"/><line x1="226.0" y1="120.0" x2="-1778.3" y2="393.0" stroke-opacity="0.045" stroke-width="1"/><line x1="-70.6" y1="120.0" x2="1933.7" y2="393.0" stroke-opacity="0.045" stroke-width="1"/><line x1="226.0" y1="120.0" x2="-1855.8" y2="393.0" stroke-opacity="0.045" stroke-width="1"/><line x1="-70.6" y1="120.0" x2="2011.2" y2="393.0" stroke-opacity="0.045" stroke-width="1"/><line x1="226.0" y1="120.0" x2="-2010.8" y2="393.0" stroke-opacity="0.045" stroke-width="1"/><line x1="-70.6" y1="120.0" x2="2166.2" y2="393.0" stroke-opacity="0.045" stroke-width="1"/><line x1="226.0" y1="120.0" x2="-2088.3" y2="393.0" stroke-opacity="0.045" stroke-width="1"/><line x1="-70.6" y1="120.0" x2="2243.7" y2="393.0" stroke-opacity="0.045" stroke-width="1"/><line x1="226.0" y1="120.0" x2="-2165.8" y2="393.0" stroke-opacity="0.045" stroke-width="1"/><line x1="-70.6" y1="120.0" x2="2321.2" y2="393.0" stroke-opacity="0.045" stroke-width="1"/><line x1="226.0" y1="120.0" x2="-2243.3" y2="393.0" stroke-opacity="0.045" stroke-width="1"/><line x1="-70.6" y1="120.0" x2="2398.7" y2="393.0" stroke-opacity="0.045" stroke-width="1"/></g><rect x="0" y="128" width="155.5" height="26" fill="url(#gfade)"/></svg>
</div>
<div class="abs" style="left:219px;top:45px;width:1px;height:128px;background:linear-gradient(#7a96bc,#a8c4e4 80%,#d0e4f0);opacity:.8"></div>
<div class="abs" style="left:221px;top:47px;width:38px;height:158.5px;background:#1e1e1e;border-radius:4px"></div>
<div class="abs" style="left:233px;top:52px;width:15px;height:1px;background:#5a5a5a"></div><div class="abs" style="left:233px;top:55px;width:15px;height:1px;background:#5a5a5a"></div>
<svg style="left:228px;top:69px" width="13" height="13" viewBox="0 0 13 13" preserveAspectRatio="none" fill="none" stroke="#d0d0d0" stroke-width="1.1" stroke-linejoin="round"><path d="M6.5 0.7L12 3.6V9.4L6.5 12.3L1 9.4V3.6Z"/><path d="M1 3.6L6.5 6.5L12 3.6M6.5 6.5V12.3"/></svg>
<svg style="left:244px;top:74px" width="7" height="4.4" viewBox="0 0 7 4.4"><path d="M0 0H7L3.5 4.4Z" fill="#d0d0d0"/></svg>
<div class="ob" style="left:223.8px;top:91.4px;width:32.5px;height:17.3px;border-radius:3px 3px 0 0;"></div>
<div class="ob on" style="left:223.8px;top:110.1px;width:32.5px;height:17.8px;"></div>
<div class="ob" style="left:223.8px;top:129px;width:32.5px;height:17.3px;"></div>
<div class="ob" style="left:223.8px;top:147.5px;width:32.5px;height:17.3px;"></div>
<div class="ob" style="left:223.8px;top:166px;width:32.5px;height:17.3px;"></div>
<div class="ob" style="left:223.8px;top:185px;width:32.5px;height:17.3px;border-radius:0 0 3px 3px;"></div>
<svg style="left:234px;top:93px" width="13.2" height="14" viewBox="0 0 13.2 14"><path d="M3.7 13.7L2.3 11L0.4 7.1Q0.1 6.1 0.9 5.8Q1.5 5.7 1.9 6.4L3.1 8.2L3 1.6Q3 0.9 3.7 0.9Q4.4 0.9 4.5 1.6L5.2 6L5.8 1Q5.9 0.3 6.6 0.3Q7.4 0.3 7.4 1.1L7.6 6L8.8 1.9Q9 1.3 9.7 1.4Q10.4 1.6 10.3 2.3L9.8 6.6L11.6 4.4Q12 3.9 12.6 4.1Q13.1 4.5 12.8 5.1L11.2 9.4L10.3 13.7Z" fill="#c8d0d0" stroke="#c8d0d0" stroke-width="0.5" stroke-linejoin="round"/></svg>
<svg style="left:233.2px;top:111.8px" width="14.4" height="14.2" viewBox="0 0 16 16" preserveAspectRatio="none" fill="#c8d0d0" stroke="#c8d0d0"><path d="M8 3V13M3 8H13" stroke-width="1.1" stroke-opacity=".55" fill="none"/><path d="M8 0.2L10.6 3.6H5.4ZM8 15.8L10.6 12.4H5.4ZM0.2 8L3.6 5.4V10.6ZM15.8 8L12.4 5.4V10.6Z" stroke="none"/></svg>
<svg style="left:233px;top:130px" width="15" height="15" viewBox="0 0 15 15" fill="none" stroke="#c8d0d0" stroke-width="1.1"><path d="M6.5 1.2A6.2 6.2 0 0 0 3.4 12.4"/><path d="M8.5 13.8A6.2 6.2 0 0 0 11.6 2.6"/><path d="M1.6 12.9H4.4V10" /><path d="M13.4 2.1H10.6V5"/></svg>
<svg style="left:234px;top:149.5px" width="13" height="13" viewBox="0 0 13 13" fill="none" stroke="#c8d0d0" stroke-width="1.1"><rect x="0.6" y="0.6" width="11.8" height="11.8" rx="0.8"/><rect x="0.6" y="8.4" width="4" height="4"/><path d="M5.4 7.6L10 3M6.6 2.8H10.2V6.4"/></svg>
<svg style="left:234px;top:168px" width="13" height="13" viewBox="0 0 13 13" fill="#c8d0d0" stroke="none"><rect x="0" y="0" width="2.6" height="2.6"/><rect x="10.4" y="0" width="2.6" height="2.6"/><rect x="0" y="10.4" width="2.6" height="2.6"/><rect x="10.4" y="10.4" width="2.6" height="2.6"/><rect x="3.4" y="0.8" width="6.2" height="1"/><rect x="3.4" y="11.2" width="6.2" height="1"/><rect x="0.8" y="3.4" width="1" height="6.2"/><rect x="11.2" y="3.4" width="1" height="6.2"/></svg>
<svg style="left:232.5px;top:186px" width="15" height="15" viewBox="0 0 15 15" fill="none" stroke="#c8d0d0" stroke-width="1"><circle cx="7.3" cy="7.7" r="5.6"/><path d="M7.3 4.2V11.2M3.8 7.7H10.8" /><path d="M7.3 3.2L8.5 4.8H6.1ZM7.3 12.2L8.5 10.6H6.1ZM2.8 7.7L4.4 6.5V8.9ZM11.8 7.7L10.2 6.5V8.9Z" fill="#c8d0d0" stroke="none"/><path d="M12 0.3H14.7V3Z M0.3 12.2V14.9H3Z" fill="#c8d0d0" stroke="none"/></svg>
<div class="abs" style="left:304px;top:53.5px;width:14px;height:1px;background:#8a8680"></div><div class="abs" style="left:304px;top:56.5px;width:14px;height:1px;background:#8a8680"></div>
<svg style="left:0;top:0" width="1" height="1">
<defs><radialGradient id="wc" cx="0.4" cy="0.4" r="0.7"><stop offset="0" stop-color="#ffffff"/><stop offset="1" stop-color="#c8d4dc"/></radialGradient></defs>
<path d="M346.6 106L351.2 115.5Q346.8 118.5 342.4 115.5Z" fill="url(#wc)"/>
<path d="M344 95L333.5 93.8Q328.5 90.5 331.5 86.8Q334.5 84.5 338 87Z" fill="url(#wc)"/>
<path d="M350 95L360.5 93.8Q365.5 90.5 362.5 86.8Q359.5 84.5 356 87Z" fill="url(#wc)"/>
<path d="M341 70.6H353.2L347.6 88H346.2Z" fill="#8db23e"/>
<path d="M322 99.6L340.2 98.8L328.6 111.8Q323 108 322 99.6Z" fill="#d24a3a"/><path d="M340.2 98.8L328.6 111.8L326.6 106Z" fill="#a83428" opacity=".6"/>
<path d="M371 99.6L353.2 98.8L365.4 111.8Q370.4 108 371 99.6Z" fill="#3a82d8"/><path d="M353.2 98.8L365.4 111.8L360 108Z" fill="#2a68b8" opacity=".7"/>
<path d="M346.6 88.6L353.8 92V100.6L346.6 104.6L339.4 100.6V92Z" fill="#b2b6b6"/>
<path d="M346.6 88.6L353.8 92L346.6 95.4L339.4 92Z" fill="#c4c8c8"/>
</svg>
<div class="t" style="left:344.2px;top:54.5px;color:#ececec;font-size:11.5px">y</div>
<div class="t" style="left:316px;top:100.6px;color:#ececec;font-size:11px">x</div>
<svg style="left:324.5px;top:136.5px" width="9" height="8" viewBox="0 0 9 8" fill="none" stroke="#d8d4cc" stroke-width="0.9" opacity=".8"><path d="M8.6 0.3L0.5 4L8.6 7.7M0.5 4H8.6"/></svg>
<div class="t" id="t_persp" style="left:336.5px;top:133.5px;color:#d4d0c8;opacity:.75;font-size:11px">Persp</div>
<div class="abs" style="left:220.5px;top:399px;width:155px;height:16.5px;background:#1e1e1e;border-radius:0 0 0 3px"></div>
<div class="abs" style="left:224.5px;top:402px;width:1px;height:10px;background:#5a5a5a"></div><div class="abs" style="left:227.5px;top:402px;width:1px;height:10px;background:#5a5a5a"></div>
<div class="ob on" style="left:235px;top:401.2px;width:28px;height:12.1px"></div>
<div class="ob" style="left:264.5px;top:401.2px;width:28.5px;height:12.1px"></div>
<div class="ob on" style="left:294px;top:401.2px;width:28px;height:12.1px"></div>
<div class="ob on" style="left:323px;top:401.2px;width:28.3px;height:12.1px"></div>
<div class="ob on" style="left:352.5px;top:401.2px;width:23px;height:12.1px"></div>
<svg style="left:241px;top:398px" width="16" height="16" viewBox="0 0 16 16" fill="#c8d0d0" stroke="#c8d0d0" opacity=".85"><path d="M8 3V13M3 8H13" stroke-width="1" fill="none"/><path d="M8 0.3L10.2 3.4H5.8ZM8 15.7L10.2 12.6H5.8ZM0.3 8L3.4 5.8V10.2ZM15.7 8L12.6 5.8V10.2Z" stroke="none"/></svg>
<svg style="left:272px;top:399px" width="14" height="13" viewBox="0 0 14 13" fill="none" stroke="#c8d0d0" stroke-width="1.2"><path d="M2.5 0L10.5 8.5M11 0L3.5 8.5"/><path d="M0.8 8V11.8H13.2V8" stroke-width="1"/></svg>
<svg style="left:301px;top:399px" width="14" height="13" viewBox="0 0 14 13" fill="none" stroke="#c8d0d0" stroke-width="1.2"><path d="M0 2H14M0 6.5H14M0 11H14"/><path d="M4 4.6V8.4M10 9.1V12.9" stroke-width="1.6"/></svg>
<svg style="left:330px;top:399px" width="14" height="13" viewBox="0 0 14 13" fill="none" stroke="#c8d0d0" stroke-width="1"><path d="M0 3H14M0 7H14M3 0L1 13M7 0V13M11 0L13 13M4.5 0L9 13"/></svg>
<svg style="left:359.6px;top:397.4px" width="14" height="14" viewBox="0 0 14 14" opacity=".9"><defs><clipPath id="mc2"><circle cx="7" cy="7" r="6.55"/></clipPath></defs><path clip-path="url(#mc2)" fill-rule="evenodd" fill="#e6f0f0" d="M7 0.45a6.55 6.55 0 1 0 0 13.1a6.55 6.55 0 1 0 0-13.1ZM6.45 1.55a4.9 4.9 0 1 0 0 9.8a4.9 4.9 0 1 0 0-9.8Z"/></svg>
<div class="abs" style="left:375.2px;top:399px;width:2px;height:19px;background:#191919"></div>
<div class="abs" style="left:219px;top:378px;width:154.5px;height:22px;background:#1e1e1e;border-radius:0 4px 4px 0"></div>
<div class="ob" style="left:219px;top:380.6px;width:27.2px;height:18px"></div>
<div class="ob" style="left:247px;top:380.6px;width:28px;height:18px"></div>
<div class="ob" style="left:276px;top:380.6px;width:28px;height:18px"></div>
<div class="ob on" style="left:305px;top:380.6px;width:28.5px;height:18px"></div>
<div class="ob" style="left:337.3px;top:380.6px;width:20px;height:18px;border-radius:2px 0 0 2px"></div><div class="ob" style="left:358px;top:380.6px;width:12px;height:18px;border-radius:0 2px 2px 0"></div>
<svg style="left:224.6px;top:382.6px" width="13.4" height="13.4" viewBox="0 0 14 14" fill="none" stroke="#c8d0d0" stroke-width="1.1"><circle cx="7" cy="7" r="6.3"/><path d="M6.6 0.8Q4.6 7 6.4 13.2M0.8 7.6Q7 10.2 13.2 7.4"/></svg>
<svg style="left:254px;top:382.6px" width="13.4" height="13.4" viewBox="0 0 14 14" fill="none" stroke="#c8d0d0" stroke-width="1.1"><circle cx="7" cy="7" r="6.3"/><path d="M6.6 0.8Q4.6 7 6.4 13.2M0.8 7.6Q7 10.2 13.2 7.4"/><path d="M11.6 2.8A6.2 6.2 0 0 1 2.8 11.6A7.4 7.4 0 0 0 11.6 2.8Z" fill="#c8d0d0" stroke="none"/></svg>
<svg style="left:283.4px;top:382.6px" width="14" height="14" viewBox="0 0 14 14"><circle cx="7" cy="7" r="6.4" fill="#c8d0d0"/></svg>
<svg style="left:312.4px;top:382.4px" width="14" height="14" viewBox="0 0 14 14"><defs><clipPath id="mc1"><circle cx="7" cy="7" r="6.55"/></clipPath></defs><path clip-path="url(#mc1)" fill-rule="evenodd" fill="#e6f0f0" d="M7 0.45a6.55 6.55 0 1 0 0 13.1a6.55 6.55 0 1 0 0-13.1ZM6.45 1.55a4.9 4.9 0 1 0 0 9.8a4.9 4.9 0 1 0 0-9.8Z"/></svg>
<svg style="left:342.2px;top:383px" width="13.4" height="13.4" viewBox="0 0 13 13" fill="none" stroke="#c0c8c8" stroke-width="1.1"><ellipse cx="6.5" cy="7.7" rx="4" ry="4.8" fill="#c0c8c8" stroke="none"/><circle cx="6.5" cy="2.7" r="2.1" fill="#c0c8c8" stroke="none"/><path d="M3.4 5.6L0.8 3.4M9.6 5.6L12.2 3.4M3 8H0.3M10 8H12.7M3.6 10.4L1 12.6M9.4 10.4L12 12.6M4.6 1.6L3.4 0.2M8.4 1.6L9.6 0.2"/></svg>
<svg style="left:360.3px;top:388.1px" width="7" height="4.4" viewBox="0 0 7 4.4"><path d="M0 0H7L3.5 4.4Z" fill="#d0d0d0"/></svg>
<div class="tab" style="left:377.5px;top:1px;width:61px;height:22px"></div>
<svg style="left:385px;top:9.5px" width="13" height="7" viewBox="0 0 13 7"><rect x="0" y="0" width="13" height="7" rx="3.5" fill="#d0d0d0"/><path d="M2 3.5H5M3.5 2V5" stroke="#3c3c3c" stroke-width="1"/><circle cx="8.8" cy="4.4" r="0.9" fill="#3c3c3c"/><circle cx="10.6" cy="2.8" r="0.9" fill="#3c3c3c"/></svg>
<div class="t" id="t_game" style="left:401px;top:5.7px"><span class="sx" style="transform:scaleX(0.7)">ゲーム</span></div>
<svg style="left:971.4px;top:6.8px" width="3" height="10" viewBox="0 0 3 10"><g fill="#c4c4c4"><rect x="0.5" y="0.3" width="2" height="2"/><rect x="0.5" y="3.8" width="2" height="2"/><rect x="0.5" y="7.3" width="2" height="2"/></g></svg>
<div class="pan" id="game" style="left:377px;top:22px;width:607px;height:396px;background:linear-gradient(#1b1b1b 18px,#1d1d1d 21px,#272727 31px,#282828 36px)">
<div class="tb" style="left:0;top:0;width:607px;height:18px"></div>
<div class="sep" style="left:80px;top:0;height:18px"></div>
<div class="sep" style="left:156.5px;top:0;height:18px"></div>
<div class="sep" style="left:298.3px;top:0;height:18px"></div>
<div class="sep" style="left:410px;top:0;height:18px"></div>
<div class="sep" style="left:507.8px;top:0;height:18px"></div>
<div class="sep" style="left:531px;top:0;height:18px"></div>
<div class="sep" style="left:554.3px;top:0;height:18px"></div>
<div class="sep" style="left:577.3px;top:0;height:18px"></div>
<svg style="left:70px;top:7.3px" width="7" height="4.4" viewBox="0 0 7 4.4"><path d="M0 0H7L3.5 4.4Z" fill="#d0d0d0"/></svg>
<div class="t" id="t_display" style="letter-spacing:-0.122px;left:89.2px;top:1.6px">Display 1</div>
<svg style="left:146.3px;top:7.3px" width="7" height="4.4" viewBox="0 0 7 4.4"><path d="M0 0H7L3.5 4.4Z" fill="#d0d0d0"/></svg>
<div class="t" id="t_fhd" style="letter-spacing:0.131px;left:160px;top:1.6px">50%FHD (960x540)</div>
<svg style="left:288.3px;top:7.3px" width="7" height="4.4" viewBox="0 0 7 4.4"><path d="M0 0H7L3.5 4.4Z" fill="#d0d0d0"/></svg>
<div class="t" id="t_scale" style="left:304px;top:2px"><span class="sx" style="transform:scaleX(0.71)">スケール</span></div>
<div class="abs" style="left:348px;top:10px;width:20px;height:1px;background:#646464"></div><div class="abs" style="left:341.5px;top:6px;width:9px;height:9px;border-radius:5px;background:#9a9a9a"></div>
<div class="t" id="t_071" style="letter-spacing:-0.280px;left:374px;top:1.6px">0.71x</div>
<div class="t" id="t_playf" style="letter-spacing:-0.117px;left:414.4px;top:1.6px">Play Focused</div>
<svg style="left:497.3px;top:7.3px" width="7" height="4.4" viewBox="0 0 7 4.4"><path d="M0 0H7L3.5 4.4Z" fill="#d0d0d0"/></svg>
<svg style="left:512.6px;top:3px" width="13" height="13" viewBox="0 0 13 13" fill="none" stroke="#c0c8c8" stroke-width="1.1"><ellipse cx="6.5" cy="7.7" rx="4" ry="4.8" fill="#c0c8c8" stroke="none"/><circle cx="6.5" cy="2.7" r="2.1" fill="#c0c8c8" stroke="none"/><path d="M3.4 5.6L0.8 3.4M9.6 5.6L12.2 3.4M3 8H0.3M10 8H12.7M3.6 10.4L1 12.6M9.4 10.4L12 12.6M4.6 1.6L3.4 0.2M8.4 1.6L9.6 0.2"/></svg>
<svg style="left:536.5px;top:4.5px" width="12" height="9" viewBox="0 0 12 9"><path d="M0 2.8H2.2L5.6 0V9L2.2 6.2H0Z" fill="#d0d0d0"/><path d="M7.2 2.6Q8.4 4.5 7.2 6.4M9 1.2Q11.2 4.5 9 7.8" fill="none" stroke="#d0d0d0" stroke-width="1"/></svg>
<svg style="left:559px;top:4.3px" width="14" height="10" viewBox="0 0 14 10" fill="none" stroke="#d0d0d0" stroke-width="1"><rect x="0.5" y="0.5" width="13" height="9" rx="1"/><path d="M0.5 3.4H13.5M0.5 6.4H13.5M3.6 0.5V6.4M6.8 0.5V6.4M10 0.5V6.4M3 6.4V9.5M11 6.4V9.5"/></svg>
<div class="abs" style="left:578px;top:0.5px;width:29px;height:17px;background:#484848"></div>
<div class="t" id="t_stats" style="left:582.6px;top:2px;color:#9a9a9a;width:24px;overflow:hidden"><span class="sx" style="transform:scaleX(0.88)">統計情報</span></div>

<div class="abs" id="gimg" style="left:0;top:36.3px;width:607px;height:341.9px;overflow:hidden;background:#6b635e"><i class="g0" style="left:295.5px;width:8.5px"></i><i class="g0" style="left:303.5px;width:8.5px"></i><i class="g1" style="left:287.5px;width:8.5px"></i><i class="g1" style="left:311.5px;width:8.5px"></i><i class="g2" style="left:279.5px;width:8.5px"></i><i class="g2" style="left:319.5px;width:8.5px"></i><i class="g3" style="left:271.5px;width:8.5px"></i><i class="g3" style="left:327.5px;width:8.5px"></i><i class="g4" style="left:263.5px;width:8.5px"></i><i class="g4" style="left:335.5px;width:8.5px"></i><i class="g5" style="left:255.5px;width:8.5px"></i><i class="g5" style="left:343.5px;width:8.5px"></i><i class="g6" style="left:247.5px;width:8.5px"></i><i class="g6" style="left:351.5px;width:8.5px"></i><i class="g7" style="left:239.5px;width:8.5px"></i><i class="g7" style="left:359.5px;width:8.5px"></i><i class="g8" style="left:231.5px;width:8.5px"></i><i class="g8" style="left:367.5px;width:8.5px"></i><i class="g9" style="left:223.5px;width:8.5px"></i><i class="g9" style="left:375.5px;width:8.5px"></i><i class="g10" style="left:215.5px;width:8.5px"></i><i class="g10" style="left:383.5px;width:8.5px"></i><i class="g11" style="left:207.5px;width:8.5px"></i><i class="g11" style="left:391.5px;width:8.5px"></i><i class="g12" style="left:199.5px;width:8.5px"></i><i class="g12" style="left:399.5px;width:8.5px"></i><i class="g13" style="left:191.5px;width:8.5px"></i><i class="g13" style="left:407.5px;width:8.5px"></i><i class="g14" style="left:183.5px;width:8.5px"></i><i class="g14" style="left:415.5px;width:8.5px"></i><i class="g15" style="left:175.5px;width:8.5px"></i><i class="g15" style="left:423.5px;width:8.5px"></i><i class="g16" style="left:167.5px;width:8.5px"></i><i class="g16" style="left:431.5px;width:8.5px"></i><i class="g17" style="left:159.5px;width:8.5px"></i><i class="g17" style="left:439.5px;width:8.5px"></i><i class="g18" style="left:151.5px;width:8.5px"></i><i class="g18" style="left:447.5px;width:8.5px"></i><i class="g19" style="left:143.5px;width:8.5px"></i><i class="g19" style="left:455.5px;width:8.5px"></i><i class="g20" style="left:135.5px;width:8.5px"></i><i class="g20" style="left:463.5px;width:8.5px"></i><i class="g21" style="left:127.5px;width:8.5px"></i><i class="g21" style="left:471.5px;width:8.5px"></i><i class="g22" style="left:119.5px;width:8.5px"></i><i class="g22" style="left:479.5px;width:8.5px"></i><i class="g23" style="left:111.5px;width:8.5px"></i><i class="g23" style="left:487.5px;width:8.5px"></i><i class="g24" style="left:103.5px;width:8.5px"></i><i class="g24" style="left:495.5px;width:8.5px"></i><i class="g25" style="left:95.5px;width:8.5px"></i><i class="g25" style="left:503.5px;width:8.5px"></i><i class="g26" style="left:87.5px;width:8.5px"></i><i class="g26" style="left:511.5px;width:8.5px"></i><i class="g27" style="left:79.5px;width:8.5px"></i><i class="g27" style="left:519.5px;width:8.5px"></i><i class="g28" style="left:71.5px;width:8.5px"></i><i class="g28" style="left:527.5px;width:8.5px"></i><i class="g29" style="left:63.5px;width:8.5px"></i><i class="g29" style="left:535.5px;width:8.5px"></i><i class="g30" style="left:55.5px;width:8.5px"></i><i class="g30" style="left:543.5px;width:8.5px"></i><i class="g31" style="left:47.5px;width:8.5px"></i><i class="g31" style="left:551.5px;width:8.5px"></i><i class="g32" style="left:39.5px;width:8.5px"></i><i class="g32" style="left:559.5px;width:8.5px"></i><i class="g33" style="left:31.5px;width:8.5px"></i><i class="g33" style="left:567.5px;width:8.5px"></i><i class="g34" style="left:23.5px;width:8.5px"></i><i class="g34" style="left:575.5px;width:8.5px"></i><i class="g35" style="left:15.5px;width:8.5px"></i><i class="g35" style="left:583.5px;width:8.5px"></i><i class="g36" style="left:7.5px;width:8.5px"></i><i class="g36" style="left:591.5px;width:8.5px"></i><i class="g37" style="left:0.0px;width:8.0px"></i><i class="g37" style="left:599.5px;width:8.5px"></i></div>
</div>
<div class="pan" id="insp" style="left:986px;top:1px;width:38px;height:873px;border-radius:3px 0 0 0">
<div class="tb" style="left:0;top:0;width:38px;height:68.8px"></div>
<div class="abs" style="left:0;top:68.8px;width:38px;height:1.3px;background:#1c1c1c"></div>
<svg style="left:9.5px;top:6.4px" width="9.2" height="9.2" viewBox="0 0 10 10"><circle cx="5" cy="5" r="4.8" fill="#e0e0e0"/><rect x="4.1" y="4" width="1.8" height="4" fill="#3c3c3c"/><rect x="4.1" y="1.8" width="1.8" height="1.6" fill="#3c3c3c"/></svg>
<div class="t" style="left:23px;top:4.7px"><span class="sx" style="transform:scaleX(0.7)">インスペクター</span></div>
<svg style="left:8.6px;top:32px" width="21.3" height="18" viewBox="0 0 11 9"><path d="M0 0.8A0.8 0.8 0 0 1 0.8 0H4.2L5.4 1.5H10.2A0.8 0.8 0 0 1 11 2.3V8.2A0.8 0.8 0 0 1 10.2 9H0.8A0.8 0.8 0 0 1 0 8.2Z" fill="#c0c8ca"/></svg>
<div class="abs" style="left:0;top:805.5px;width:38px;height:1.2px;background:#1c1c1c"></div>
<div class="abs" style="left:0;top:828.8px;width:38px;height:1.2px;background:#1c1c1c"></div>
<div class="tb" style="left:0;top:806.7px;width:38px;height:67px"></div><div class="abs" style="left:0;top:828.8px;width:38px;height:1.2px;background:#1c1c1c"></div>
<div class="t" style="left:3px;top:811px"><span class="sx" style="transform:scaleX(0.78)">アセットラベル</span></div>
<div class="t" style="left:3px;top:854.6px;color:#aca8a4;font-size:11px"><span class="sx" style="transform:scaleX(0.74)">アセットバンドル</span></div>
</div>
<div class="tab" style="left:0;top:420px;width:77px;height:22px"></div>
<svg style="left:2.5px;top:427px" width="11" height="9" viewBox="0 0 11 9"><path d="M0 0.8A0.8 0.8 0 0 1 0.8 0H4.2L5.4 1.5H10.2A0.8 0.8 0 0 1 11 2.3V8.2A0.8 0.8 0 0 1 10.2 9H0.8A0.8 0.8 0 0 1 0 8.2Z" fill="#d0d4d4"/></svg>
<div class="t" id="t_proj" style="left:17px;top:424.7px"><span class="sx" style="transform:scaleX(0.69)">プロジェクト</span></div>
<svg style="left:953px;top:425.6px" width="9" height="10" viewBox="0 0 9 10"><rect x="1" y="5" width="7" height="4.2" rx="0.8" fill="none" stroke="#c8c8c8" stroke-width="1.1"/><path d="M2.2 5V3.4A2.3 2.3 0 0 1 6.8 3.2" fill="none" stroke="#c8c8c8" stroke-width="1.05"/></svg>
<svg style="left:971.4px;top:425.8px" width="3" height="10" viewBox="0 0 3 10"><g fill="#c4c4c4"><rect x="0.5" y="0.3" width="2" height="2"/><rect x="0.5" y="3.8" width="2" height="2"/><rect x="0.5" y="7.3" width="2" height="2"/></g></svg>
<div class="pan" id="proj" style="left:0;top:441px;width:984px;height:167px">
<div class="tb" style="left:0;top:0;width:984px;height:18px"></div>
<div class="abs" style="left:0;top:18px;width:984px;height:1px;background:#262626"></div>
<svg style="left:0.8px;top:3.1px" width="22" height="12" viewBox="0 0 22 12"><path d="M0.3 6H11.3M5.8 0.3V11.7" stroke="#d6d6d6" stroke-width="1.7" fill="none"/><path d="M14.3 3.8H21.7L18 8.2Z" fill="#c8c8c8"/></svg>
<div class="abs" style="left:578.5px;top:2.5px;width:282px;height:13.5px;background:#2a2a2a;border:1px solid #1f1f1f;border-radius:3px"></div>
<div class="abs" style="left:846px;top:3.5px;width:13.5px;height:11.5px;background:#3a3a3a;border-radius:0 2px 2px 0"></div>
<svg style="left:583px;top:6px" width="7" height="7" viewBox="0 0 7 7" fill="none" stroke="#c4c4c4"><circle cx="2.6" cy="2.6" r="1.9" stroke-width="1.2"/><path d="M4 4L6.4 6.4" stroke-width="1.4"/></svg>
<svg style="left:847px;top:3.6px" width="12" height="12" viewBox="0 0 12 12" fill="none" stroke="#c8c8c8"><path d="M3.2 6.2V1.6A1 1 0 0 1 4.2 0.6H10.4A1 1 0 0 1 11.4 1.6V7.8A1 1 0 0 1 10.4 8.8H5.8" stroke-width="1.2"/><rect x="0.7" y="7.4" width="3.6" height="3.6" stroke-width="1.1"/><path d="M4.6 7.2L8.8 3M5.9 2.9H8.9V5.9" stroke-width="1.2"/></svg>
<div class="sep" style="left:862.5px;top:0;height:18px"></div>
<div class="sep" style="left:885.7px;top:0;height:18px"></div>
<div class="sep" style="left:909px;top:0;height:18px"></div>
<div class="sep" style="left:932.2px;top:0;height:18px"></div>
<div class="sep" style="left:955.3px;top:0;height:18px"></div>
<svg style="left:868px;top:3px" width="12" height="12" viewBox="0 0 12 12" fill="#c8cccc"><rect x="1.6" y="0" width="5" height="5"/><circle cx="3.4" cy="8.4" r="3.2"/><path d="M8.6 2.6L11.8 8.6H6.4Z"/></svg>
<svg style="left:891px;top:4.5px" width="11" height="9" viewBox="0 0 11 9"><path d="M0.2 5.2L6 0.2H10.4V3.6L4.2 8.8Z" fill="#d4d4d4"/><circle cx="8.6" cy="2" r="0.9" fill="#3c3c3c"/></svg>
<svg style="left:913.6px;top:2.4px" width="13" height="13" viewBox="0 0 13 13"><path d="M3.9 0.3H9.1L12.7 3.9V9.1L9.1 12.7H3.9L0.3 9.1V3.9Z" fill="#e4e4e4"/><rect x="5.7" y="2.6" width="1.6" height="5.2" fill="#3c3c3c"/><rect x="5.7" y="8.8" width="1.6" height="1.6" fill="#3c3c3c"/></svg>
<svg style="left:937.4px;top:3.4px" width="11.5" height="11.5" viewBox="0 0 11.5 11.5"><polygon points="5.75,0.46 7.17,4.26 11.22,4.43 8.05,6.96 9.13,10.86 5.75,8.62 2.37,10.86 3.45,6.96 0.28,4.43 4.33,4.26" fill="#8c8c8c"/></svg>
<svg style="left:961px;top:5px" width="13" height="8" viewBox="0 0 13 8" fill="none" stroke="#707070" stroke-width="1"><path d="M0.4 4Q6.5 -2.6 12.6 4Q6.5 10.6 0.4 4Z"/><circle cx="6.5" cy="4" r="2.2" fill="#707070" stroke="none"/></svg>
<div class="t" style="left:974.3px;top:1.5px;color:#9c9c9c;font-size:12.5px">1</div>
<div class="abs" style="left:0;top:89px;width:134px;height:14px;background:#4d4d4d"></div>
<svg style="left:-2px;top:23.5px" width="8" height="6.5" viewBox="0 0 8 6.5"><path d="M0 0H8L4.0 6.5Z" fill="#5c5c5c"/></svg>
<svg style="left:10.4px;top:20.1px" width="11.2" height="11.2" viewBox="0 0 11.2 11.2"><polygon points="5.60,0.45 6.98,4.15 10.93,4.32 7.84,6.77 8.89,10.58 5.60,8.40 2.31,10.58 3.36,6.77 0.27,4.32 4.22,4.15" fill="#d4d8d8"/></svg>
<div class="t b" id="t_fav" style="letter-spacing:-0.211px;left:26px;top:18.6px;color:#d2d2d2">Favorites</div>
<svg style="left:23px;top:35px" width="11" height="11" viewBox="0 0 11 11" fill="none" stroke="#c4c4c4"><circle cx="4.3" cy="4.3" r="3.3" stroke-width="1.1"/><path d="M6.8 6.8L10.3 10.3" stroke-width="1.6"/></svg>
<div class="t" id="t_allmat" style="letter-spacing:0.054px;left:37.4px;top:33px">All Materials</div>
<svg style="left:23px;top:49.2px" width="11" height="11" viewBox="0 0 11 11" fill="none" stroke="#c4c4c4"><circle cx="4.3" cy="4.3" r="3.3" stroke-width="1.1"/><path d="M6.8 6.8L10.3 10.3" stroke-width="1.6"/></svg>
<div class="t" id="t_allpre" style="left:37.4px;top:47.2px">All Prefabs</div>
<svg style="left:22.8px;top:64.4px" width="11" height="9" viewBox="0 0 11 9"><path d="M0 0.8A0.8 0.8 0 0 1 0.8 0H4.2L5.4 1.5H10.2A0.8 0.8 0 0 1 11 2.3V8.2A0.8 0.8 0 0 1 10.2 9H0.8A0.8 0.8 0 0 1 0 8.2Z" fill="#c2c8ca"/></svg>
<svg style="left:26.6px;top:67.6px" width="6.6" height="6.6" viewBox="0 0 6.6 6.6"><polygon points="3.30,0.26 4.11,2.44 6.44,2.54 4.62,3.99 5.24,6.23 3.30,4.95 1.36,6.23 1.98,3.99 0.16,2.54 2.49,2.44" fill="#f4c020"/></svg>
<div class="t" id="t_scenes" style="left:37.4px;top:61.4px">Scenes</div>
<svg style="left:-2.4px;top:93.2px" width="8" height="6.8" viewBox="0 0 8 6.8"><path d="M0 0H8L4.0 6.8Z" fill="#858585"/></svg>
<svg style="left:10.2px;top:91px" width="12.6" height="9.6" viewBox="0 0 14 10" preserveAspectRatio="none"><path d="M0.3 1A0.7 0.7 0 0 1 1 0.3H4.2L5.2 1.6H10.2A0.7 0.7 0 0 1 10.9 2.3V3.4H3.4L0.3 8.6Z" fill="#d4d8d8"/><path d="M3.8 4.2H13.6L10.8 9.7H0.8Z" fill="#d4d8d8"/></svg>
<div class="t b" id="t_assets_l" style="letter-spacing:-0.183px;left:26px;top:89.2px;color:#d2d2d2">Assets</div>
<svg style="left:22.8px;top:105.5px" width="12" height="10" viewBox="0 0 12 10" fill="none" stroke="#c4c4c4" stroke-width="1.1" stroke-linejoin="round"><path d="M0.6 1.2A0.6 0.6 0 0 1 1.2 0.6H4.1L5.1 1.9H9.8A0.7 0.7 0 0 1 10.5 2.6V7.9A0.7 0.7 0 0 1 9.8 8.6H1.3A0.7 0.7 0 0 1 0.6 7.9Z"/></svg>
<div class="t" style="left:37.5px;top:103.6px;letter-spacing:0.1px">01</div>
<svg style="left:22.8px;top:119.7px" width="12" height="10" viewBox="0 0 12 10" fill="none" stroke="#c4c4c4" stroke-width="1.1" stroke-linejoin="round"><path d="M0.6 1.2A0.6 0.6 0 0 1 1.2 0.6H4.1L5.1 1.9H9.8A0.7 0.7 0 0 1 10.5 2.6V7.9A0.7 0.7 0 0 1 9.8 8.6H1.3A0.7 0.7 0 0 1 0.6 7.9Z"/></svg>
<div class="t" style="left:37.5px;top:117.8px;letter-spacing:0.1px">02</div>
<svg style="left:22.8px;top:133.9px" width="12" height="10" viewBox="0 0 12 10" fill="none" stroke="#c4c4c4" stroke-width="1.1" stroke-linejoin="round"><path d="M0.6 1.2A0.6 0.6 0 0 1 1.2 0.6H4.1L5.1 1.9H9.8A0.7 0.7 0 0 1 10.5 2.6V7.9A0.7 0.7 0 0 1 9.8 8.6H1.3A0.7 0.7 0 0 1 0.6 7.9Z"/></svg>
<div class="t" style="left:37.5px;top:132.0px;letter-spacing:0.1px">03</div>
<svg style="left:22.8px;top:148.1px" width="12" height="10" viewBox="0 0 12 10" fill="none" stroke="#c4c4c4" stroke-width="1.1" stroke-linejoin="round"><path d="M0.6 1.2A0.6 0.6 0 0 1 1.2 0.6H4.1L5.1 1.9H9.8A0.7 0.7 0 0 1 10.5 2.6V7.9A0.7 0.7 0 0 1 9.8 8.6H1.3A0.7 0.7 0 0 1 0.6 7.9Z"/></svg>
<div class="t" style="left:37.5px;top:146.2px;letter-spacing:0.1px">04</div>
<svg style="left:22.8px;top:162.3px" width="12" height="10" viewBox="0 0 12 10" fill="none" stroke="#c4c4c4" stroke-width="1.1" stroke-linejoin="round"><path d="M0.6 1.2A0.6 0.6 0 0 1 1.2 0.6H4.1L5.1 1.9H9.8A0.7 0.7 0 0 1 10.5 2.6V7.9A0.7 0.7 0 0 1 9.8 8.6H1.3A0.7 0.7 0 0 1 0.6 7.9Z"/></svg>
<div class="t" style="left:37.5px;top:160.4px;letter-spacing:0.1px">05</div>
<div class="abs" style="left:134.5px;top:19px;width:11.5px;height:148px;background:#3a3a3a"></div>
<svg style="left:137px;top:24px" width="7" height="4" viewBox="0 0 7 4"><path d="M0 4H7L3.5 0Z" fill="#d8d8d8"/></svg>
<div class="abs" style="left:137.4px;top:33px;width:6.6px;height:18px;border-radius:3.3px;background:#5f5f5f"></div>
<svg style="left:137px;top:157.8px" width="7" height="4" viewBox="0 0 7 4"><path d="M0 0H7L3.5 4Z" fill="#d8d8d8"/></svg>
<div class="abs" style="left:146px;top:19px;width:1px;height:148px;background:#2c2c2c"></div>
<div class="abs" style="left:147px;top:37px;width:837px;height:111px;background:#333333"></div>
<div class="abs" style="left:147px;top:148px;width:837px;height:19px;background:#404040"></div>
<svg style="left:161.8px;top:36.2px" width="12" height="10" viewBox="0 0 12 10" fill="none" stroke="#c4c4c4" stroke-width="1.1" stroke-linejoin="round"><path d="M0.6 1.2A0.6 0.6 0 0 1 1.2 0.6H4.1L5.1 1.9H9.8A0.7 0.7 0 0 1 10.5 2.6V7.9A0.7 0.7 0 0 1 9.8 8.6H1.3A0.7 0.7 0 0 1 0.6 7.9Z"/></svg>
<div class="t" id="t_f0" style="letter-spacing:0.071px;left:176.8px;top:33.8px">AdditiveReferencePose</div>
<svg style="left:161.8px;top:50.410000000000004px" width="12" height="10" viewBox="0 0 12 10" fill="none" stroke="#c4c4c4" stroke-width="1.1" stroke-linejoin="round"><path d="M0.6 1.2A0.6 0.6 0 0 1 1.2 0.6H4.1L5.1 1.9H9.8A0.7 0.7 0 0 1 10.5 2.6V7.9A0.7 0.7 0 0 1 9.8 8.6H1.3A0.7 0.7 0 0 1 0.6 7.9Z"/></svg>
<div class="t" id="t_f1" style="left:176.8px;top:48.0px">AllSkyFree</div>
<svg style="left:161.8px;top:64.62px" width="12" height="10" viewBox="0 0 12 10" fill="none" stroke="#c4c4c4" stroke-width="1.1" stroke-linejoin="round"><path d="M0.6 1.2A0.6 0.6 0 0 1 1.2 0.6H4.1L5.1 1.9H9.8A0.7 0.7 0 0 1 10.5 2.6V7.9A0.7 0.7 0 0 1 9.8 8.6H1.3A0.7 0.7 0 0 1 0.6 7.9Z"/></svg>
<div class="t" id="t_f2" style="left:176.8px;top:62.2px">Analytical_Shape</div>
<svg style="left:161.8px;top:78.83px" width="12" height="10" viewBox="0 0 12 10" fill="none" stroke="#c4c4c4" stroke-width="1.1" stroke-linejoin="round"><path d="M0.6 1.2A0.6 0.6 0 0 1 1.2 0.6H4.1L5.1 1.9H9.8A0.7 0.7 0 0 1 10.5 2.6V7.9A0.7 0.7 0 0 1 9.8 8.6H1.3A0.7 0.7 0 0 1 0.6 7.9Z"/></svg>
<div class="t" id="t_f3" style="left:176.8px;top:76.4px">Animation</div>
<svg style="left:161.8px;top:93.03999999999999px" width="12" height="10" viewBox="0 0 12 10" fill="none" stroke="#c4c4c4" stroke-width="1.1" stroke-linejoin="round"><path d="M0.6 1.2A0.6 0.6 0 0 1 1.2 0.6H4.1L5.1 1.9H9.8A0.7 0.7 0 0 1 10.5 2.6V7.9A0.7 0.7 0 0 1 9.8 8.6H1.3A0.7 0.7 0 0 1 0.6 7.9Z"/></svg>
<div class="t" id="t_f4" style="left:176.8px;top:90.6px">Animation_1</div>
<svg style="left:161.8px;top:107.25px" width="12" height="10" viewBox="0 0 12 10" fill="none" stroke="#c4c4c4" stroke-width="1.1" stroke-linejoin="round"><path d="M0.6 1.2A0.6 0.6 0 0 1 1.2 0.6H4.1L5.1 1.9H9.8A0.7 0.7 0 0 1 10.5 2.6V7.9A0.7 0.7 0 0 1 9.8 8.6H1.3A0.7 0.7 0 0 1 0.6 7.9Z"/></svg>
<div class="t" id="t_f5" style="left:176.8px;top:104.9px">Animations</div>
<svg style="left:161.8px;top:121.46000000000001px" width="12" height="10" viewBox="0 0 12 10" fill="none" stroke="#c4c4c4" stroke-width="1.1" stroke-linejoin="round"><path d="M0.6 1.2A0.6 0.6 0 0 1 1.2 0.6H4.1L5.1 1.9H9.8A0.7 0.7 0 0 1 10.5 2.6V7.9A0.7 0.7 0 0 1 9.8 8.6H1.3A0.7 0.7 0 0 1 0.6 7.9Z"/></svg>
<div class="t" id="t_f6" style="left:176.8px;top:119.1px">Armor</div>
<svg style="left:161.8px;top:135.67px" width="12" height="10" viewBox="0 0 12 10" fill="none" stroke="#c4c4c4" stroke-width="1.1" stroke-linejoin="round"><path d="M0.6 1.2A0.6 0.6 0 0 1 1.2 0.6H4.1L5.1 1.9H9.8A0.7 0.7 0 0 1 10.5 2.6V7.9A0.7 0.7 0 0 1 9.8 8.6H1.3A0.7 0.7 0 0 1 0.6 7.9Z"/></svg>
<div class="t" id="t_f7" style="left:176.8px;top:133.3px">Arrow</div>
<div class="abs" style="left:147px;top:19px;width:837px;height:18px;background:#404040"></div>
<div class="t b" id="t_assets_r" style="letter-spacing:-0.183px;left:150px;top:19.6px;color:#d2d2d2">Assets</div>
<svg style="left:151px;top:153.9px" width="10.4" height="9" viewBox="0 0 11 9"><path d="M0 0.8A0.8 0.8 0 0 1 0.8 0H4.2L5.4 1.5H10.2A0.8 0.8 0 0 1 11 2.3V8.2A0.8 0.8 0 0 1 10.2 9H0.8A0.8 0.8 0 0 1 0 8.2Z" fill="#c2c8ca"/></svg>
<div class="t" id="t_assets15" style="letter-spacing:-0.167px;left:164px;top:151.2px;font-size:11.5px">Assets/15</div>
<div class="abs" style="left:972px;top:37px;width:12px;height:111px;background:#393939"></div>
<svg style="left:974.5px;top:42.5px" width="7" height="4" viewBox="0 0 7 4"><path d="M0 4H7L3.5 0Z" fill="#d8d8d8"/></svg>
<div class="abs" style="left:975px;top:52px;width:7px;height:16.5px;border-radius:3.5px;background:#5f5f5f"></div>
<svg style="left:974.5px;top:139px" width="7" height="4" viewBox="0 0 7 4"><path d="M0 0H7L3.5 4Z" fill="#d8d8d8"/></svg>
<div class="abs" style="left:929px;top:157px;width:41px;height:1px;background:#5e5e5e"></div><div class="abs" style="left:921px;top:153.3px;width:8.4px;height:8.4px;border-radius:5px;background:#a0a0a0"></div>
</div>
<div class="tab" style="left:0;top:610px;width:70px;height:22px"></div>
<svg style="left:3.2px;top:616.2px" width="9" height="10" viewBox="0 0 9 10"><rect x="0" y="0" width="9" height="10" rx="1" fill="#d0d0d0"/><path d="M1.6 2.6H7.4M1.6 5H7.4M1.6 7.4H5.4" stroke="#3c3c3c" stroke-width="1"/></svg>
<div class="t" id="t_cons" style="left:17px;top:614.7px"><span class="sx" style="transform:scaleX(0.69)">コンソール</span></div>
<svg style="left:971.4px;top:615.8px" width="3" height="10" viewBox="0 0 3 10"><g fill="#c4c4c4"><rect x="0.5" y="0.3" width="2" height="2"/><rect x="0.5" y="3.8" width="2" height="2"/><rect x="0.5" y="7.3" width="2" height="2"/></g></svg>
<div class="pan" id="cons" style="left:0;top:631px;width:984px;height:243px">
<div class="tb" style="left:0;top:0;width:984px;height:18px"></div>
<div class="abs" style="left:92.5px;top:0.5px;width:81.5px;height:17px;background:#4e4e4e"></div>
<div class="sep" style="left:24.5px;top:0;height:18px"></div>
<div class="sep" style="left:40px;top:0;height:18px"></div>
<div class="sep" style="left:92px;top:0;height:18px"></div>
<div class="sep" style="left:174.2px;top:0;height:18px"></div>
<div class="sep" style="left:221px;top:0;height:18px"></div>
<div class="t" id="t_clear" style="left:-1.5px;top:2px"><span class="sx" style="transform:scaleX(0.92)">消去</span></div>
<svg style="left:29.3px;top:7.4px" width="7" height="4.4" viewBox="0 0 7 4.4"><path d="M0 0H7L3.5 4.4Z" fill="#d0d0d0"/></svg>
<div class="t" id="t_collapse" style="left:45px;top:2px"><span class="sx" style="transform:scaleX(0.79)">折りたたむ</span></div>
<div class="t" id="t_errpause" style="left:97px;top:2px;color:#aaaaaa"><span class="sx" style="transform:scaleX(0.85)">エラーで一時停止</span></div>
<div class="t" id="t_editor" style="letter-spacing:0.117px;left:178.2px;top:1.6px">Editor</div>
<svg style="left:210.8px;top:6.9px" width="6.4" height="4.2" viewBox="0 0 6.4 4.2"><path d="M0 0H6.4L3.2 4.2Z" fill="#d0d0d0"/></svg>
<div class="abs" style="left:606.5px;top:2.5px;width:264.5px;height:13.5px;background:#2a2a2a;border:1px solid #1f1f1f;border-radius:3px"></div>
<svg style="left:610.6px;top:6px" width="7" height="7" viewBox="0 0 7 7" fill="none" stroke="#c4c4c4"><circle cx="2.6" cy="2.6" r="1.9" stroke-width="1.2"/><path d="M4 4L6.4 6.4" stroke-width="1.4"/></svg>
<div class="abs" style="left:875.5px;top:0.5px;width:26.5px;height:17px;background:#494949"></div>
<div class="abs" style="left:903.5px;top:0.5px;width:28.5px;height:17px;background:#494949"></div>
<div class="abs" style="left:934px;top:0.5px;width:49.5px;height:17px;background:#494949"></div>
<svg style="left:880px;top:2.6px" width="13" height="14" viewBox="0 0 13 14"><circle cx="6" cy="6" r="5.9" fill="#e4ecec"/><path d="M8 10.5L12 13L10.6 8.6Z" fill="#e4ecec"/><rect x="5.2" y="2.4" width="1.6" height="4.8" fill="#3c4c5c"/><rect x="5.2" y="8.2" width="1.6" height="1.6" fill="#3c4c5c"/></svg>
<div class="t" style="left:893.6px;top:1.6px;color:#989898;font-size:11.5px">1</div>
<svg style="left:0;top:0" width="1" height="1"><path d="M914.5 3.8000000000000007L919.7 14.0H909.3Z" fill="#f8c010" stroke="#f8c010" stroke-width="0.6375" stroke-linejoin="round"/><path d="M913.905 7.2H915.095L914.925 11.025H914.075Z" fill="#5a4a10"/><circle cx="914.5" cy="12.555" r="0.68" fill="#5a4a10"/></svg>
<div class="t" style="left:923px;top:1.6px;color:#989898;font-size:11.5px">6</div>
<svg style="left:0;top:0" width="1" height="1"><polygon points="950.20,11.57 946.57,15.20 941.43,15.20 937.80,11.57 937.80,6.43 941.43,2.80 946.57,2.80 950.20,6.43" fill="#f84840"/><path d="M943.225 5.383333333333333H944.775L944.5683333333334 10.033333333333333H943.4316666666666Z" fill="#4a1410"/><circle cx="944" cy="11.738333333333333" r="0.8783333333333334" fill="#4a1410"/></svg>
<div class="t" id="t_999" style="left:952.6px;top:1.6px;color:#989898;font-size:11.5px">999+</div>
<div class="abs" style="left:0;top:18px;width:972px;height:11px;background:#3f3f3f"></div>
<div class="abs" style="left:0;top:63px;width:972px;height:34px;background:#2c5d87"></div>
<div class="abs" style="left:0;top:130px;width:972px;height:34px;background:#3f3f3f"></div>
<div class="abs" style="left:0;top:18px;width:984px;height:157px;overflow:hidden">
<svg style="left:0;top:0" width="1" height="1"><polygon points="26.60,-1.00 19.80,5.80 10.20,5.80 3.40,-1.00 3.40,-10.60 10.20,-17.40 19.80,-17.40 26.60,-10.60" fill="#ff534a"/><path d="M13.55 -12.566666666666666H16.45L16.063333333333333 -3.8666666666666663H13.936666666666667Z" fill="#fff4f2"/><circle cx="15" cy="-0.6766666666666667" r="1.6433333333333333" fill="#fff4f2"/></svg>
<svg style="left:0;top:0" width="1" height="1"><polygon points="26.60,32.70 19.80,39.50 10.20,39.50 3.40,32.70 3.40,23.10 10.20,16.30 19.80,16.30 26.60,23.10" fill="#ff534a"/><path d="M13.55 21.133333333333333H16.45L16.063333333333333 29.833333333333332H13.936666666666667Z" fill="#fff4f2"/><circle cx="15" cy="33.02333333333333" r="1.6433333333333333" fill="#fff4f2"/></svg>
<svg style="left:0;top:0" width="1" height="1"><path d="M15 50.5L26.0 72.5H4.0Z" fill="#ffc107" stroke="#ffc107" stroke-width="1.375" stroke-linejoin="round"/><path d="M13.716666666666667 57.833333333333336H16.28333333333333L15.916666666666666 66.08333333333333H14.083333333333334Z" fill="#fffdf4"/><circle cx="15" cy="69.38333333333333" r="1.4666666666666668" fill="#fffdf4"/></svg>
<svg style="left:0;top:0" width="1" height="1"><polygon points="26.60,101.30 19.80,108.10 10.20,108.10 3.40,101.30 3.40,91.70 10.20,84.90 19.80,84.90 26.60,91.70" fill="#ff534a"/><path d="M13.55 89.73333333333333H16.45L16.063333333333333 98.43333333333334H13.936666666666667Z" fill="#fff4f2"/><circle cx="15" cy="101.62333333333333" r="1.6433333333333333" fill="#fff4f2"/></svg>
<svg style="left:0;top:0" width="1" height="1"><polygon points="26.60,134.80 19.80,141.60 10.20,141.60 3.40,134.80 3.40,125.20 10.20,118.40 19.80,118.40 26.60,125.20" fill="#ff534a"/><path d="M13.55 123.23333333333333H16.45L16.063333333333333 131.93333333333334H13.936666666666667Z" fill="#fff4f2"/><circle cx="15" cy="135.12333333333333" r="1.6433333333333333" fill="#fff4f2"/></svg>
<svg style="left:0;top:0" width="1" height="1"><polygon points="26.60,168.80 19.80,175.60 10.20,175.60 3.40,168.80 3.40,159.20 10.20,152.40 19.80,152.40 26.60,159.20" fill="#ff534a"/><path d="M13.55 157.23333333333332H16.45L16.063333333333333 165.93333333333334H13.936666666666667Z" fill="#fff4f2"/><circle cx="15" cy="169.12333333333333" r="1.6433333333333333" fill="#fff4f2"/></svg>
<div class="t" id="t_r2" style="letter-spacing:0.049px;left:31px;top:13.5px">[09:17:16] Shader error in '': Parse error: syntax error, unexpected $end, expecting TOK_SHADER at line 1</div>
<div class="t" id="t_r3" style="letter-spacing:0.143px;left:31px;top:47.5px;color:#dcdcdc">[09:17:17] This project uses Input Manager, which is marked for deprecation. To manage input in your project, use the <a>Input System package</a> instead.</div>
<div class="t" id="t_r4" style="letter-spacing:0.153px;left:31px;top:81.3px">[09:17:22] [Worker0] Unknown error occurred while loading 'Assets/ChapterPanel.controller'.</div>
<div class="t" id="t_r5" style="letter-spacing:0.144px;left:31px;top:115.1px">[09:17:22] [Worker0] Failed to load 'F:/myunity/BootsRe/Assets/ChapterPanel_NextOut.anim'. File may be corrupted or was serialized with a newer version of Unity.</div>
<div class="t" id="t_r6" style="letter-spacing:0.144px;left:31px;top:148.9px">[09:17:22] [Worker0] Failed to load 'Assets/ChapterPanel_NextOut.anim'. File may be corrupted or was serialized with a newer version of Unity.</div>
</div>
<div class="abs" style="left:972px;top:18px;width:12px;height:157px;background:#393939"></div>
<svg style="left:974.8px;top:24px" width="7" height="4" viewBox="0 0 7 4"><path d="M0 4H7L3.5 0Z" fill="#d8d8d8"/></svg>
<div class="abs" style="left:975px;top:87px;width:7px;height:18px;border-radius:3.5px;background:#5f5f5f"></div>
<svg style="left:974.8px;top:167px" width="7" height="4" viewBox="0 0 7 4"><path d="M0 0H7L3.5 4Z" fill="#d8d8d8"/></svg>
<div class="abs" style="left:0;top:175px;width:984px;height:1px;background:#232323"></div>
<div class="t" id="t_detail" style="letter-spacing:0.139px;left:-1px;top:178px">This project uses Input Manager, which is marked for deprecation. To manage input in your project, use the <a>Input System package</a> instead.</div>
</div>
<svg style="left:0;top:0" width="1" height="1"><polygon points="8.40,886.24 5.24,889.40 0.76,889.40 -2.40,886.24 -2.40,881.76 0.76,878.60 5.24,878.60 8.40,881.76" fill="#ff534a"/><path d="M2.325 880.85H3.675L3.495 884.9H2.505Z" fill="#fff"/><circle cx="3" cy="886.385" r="0.765" fill="#fff"/></svg>
<div class="t" id="t_status" style="letter-spacing:0.142px;left:13.4px;top:877.2px;color:#d32626">[Worker1] Failed to load 'Assets/Settings Element (Dropdown Alt).prefab'. File may be corrupted or was serialized with a newer version of Unity.</div>
</body>
</html>
